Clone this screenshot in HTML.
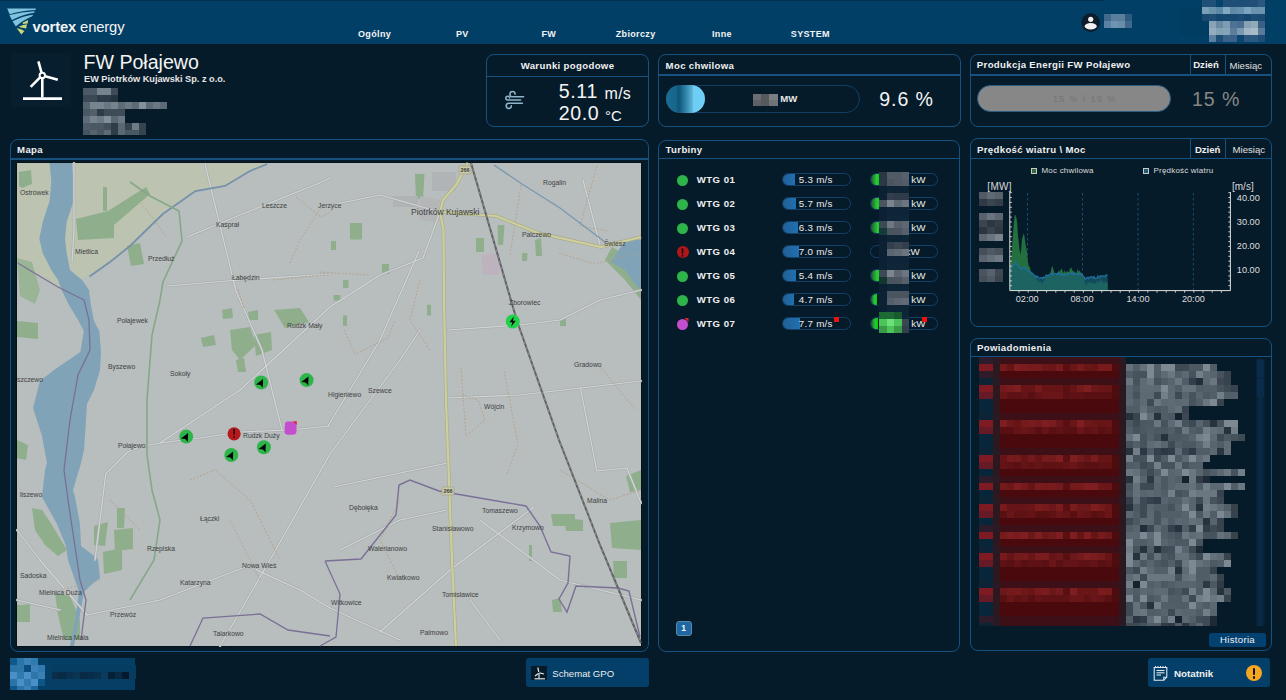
<!DOCTYPE html>
<html><head><meta charset="utf-8">
<style>
*{margin:0;padding:0;box-sizing:border-box}
html,body{width:1286px;height:700px;overflow:hidden;background:#061b2a;font-family:"Liberation Sans",sans-serif;color:#fff}
.a{position:absolute}
.t{position:absolute;white-space:nowrap}
.pn{position:absolute;border:1.6px solid #17517f;border-radius:8px}
</style></head><body>
<div class="a" style="left:0px;top:0px;width:1286px;height:44px;background:#023f67;"></div>
<div class="a" style="left:0px;top:0px;width:1104px;height:1px;background:#03304f;"></div>
<svg class="a" style="left:0;top:0" width="40" height="40" viewBox="0 0 40 40">
<path d="M7.2 8.6 L35.8 8.4 L35.6 9.9 Q20 10.5 9.6 14.3 Z" fill="#7fc3de"/>
<path d="M9.4 15.1 Q22 11.6 34.6 11.2 L34.3 12.8 Q22 14.5 11.9 20.1 Z" fill="#7fc3de"/>
<path d="M12.5 21.3 Q24 15.6 33.2 14.8 L32.3 16.2 Q23 20 15.8 26.5 Z" fill="#7fc3de"/>
<path d="M22.4 22.8 L28.1 19.9 L27.8 23.4 Q25 23.6 23.2 24 Z" fill="#c5d57c"/>
<path d="M18.6 26.7 Q23 24.6 26.9 24.3 L26.2 28.6 Q23.5 27.6 20.8 27.4 Z" fill="#c5d57c"/>
<path d="M16.6 28.1 Q21 29 24.5 31.1 L21.3 34.5 Z" fill="#c5d57c"/>
</svg>
<div class="t" style="left:32.6px;top:20.4px;font-size:14.8px;line-height:14.8px;font-weight:normal;color:#f4f4f4;letter-spacing:-0.15px"><b>vortex</b> energy</div>
<div class="t" style="left:358.0px;top:29.7px;font-size:9px;line-height:9px;font-weight:bold;color:#f4f4f4;letter-spacing:0.35px">Ogólny</div>
<div class="t" style="left:456.0px;top:29.7px;font-size:9px;line-height:9px;font-weight:bold;color:#f4f4f4;letter-spacing:0.35px">PV</div>
<div class="t" style="left:541.5px;top:29.7px;font-size:9px;line-height:9px;font-weight:bold;color:#f4f4f4;letter-spacing:0.35px">FW</div>
<div class="t" style="left:615.7px;top:29.7px;font-size:9px;line-height:9px;font-weight:bold;color:#f4f4f4;letter-spacing:0.35px">Zbiorczy</div>
<div class="t" style="left:712.0px;top:29.7px;font-size:9px;line-height:9px;font-weight:bold;color:#f4f4f4;letter-spacing:0.35px">Inne</div>
<div class="t" style="left:790.8px;top:29.7px;font-size:9px;line-height:9px;font-weight:bold;color:#f4f4f4;letter-spacing:0.35px">SYSTEM</div>
<svg class="a" style="left:1080px;top:12px" width="22" height="22" viewBox="0 0 22 22">
<circle cx="10.7" cy="10.6" r="9.3" fill="#0b1c2b"/>
<circle cx="10.7" cy="7.3" r="2.6" fill="#f0f0f0"/>
<ellipse cx="10.7" cy="14.3" rx="6" ry="3.2" fill="#f0f0f0"/>
</svg>
<div class="a" style="left:1180px;top:7px;width:86px;height:28px;background:#013c63;"></div>
<div class="a" style="left:1202px;top:0px;width:7px;height:7px;background:#1f5077;"></div>
<div class="a" style="left:1209px;top:0px;width:7px;height:7px;background:#1f5077;"></div>
<div class="a" style="left:1216px;top:0px;width:7px;height:7px;background:#064470;"></div>
<div class="a" style="left:1223px;top:0px;width:7px;height:7px;background:#1f4f77;"></div>
<div class="a" style="left:1230px;top:0px;width:7px;height:7px;background:#1f4f77;"></div>
<div class="a" style="left:1237px;top:0px;width:7px;height:7px;background:#1f4f77;"></div>
<div class="a" style="left:1244px;top:0px;width:7px;height:7px;background:#1f4f77;"></div>
<div class="a" style="left:1251px;top:0px;width:7px;height:7px;background:#214f77;"></div>
<div class="a" style="left:1258px;top:0px;width:7px;height:7px;background:#2a5880;"></div>
<div class="a" style="left:1202px;top:7px;width:7px;height:7px;background:#7aa0b8;"></div>
<div class="a" style="left:1209px;top:7px;width:7px;height:7px;background:#6a92aa;"></div>
<div class="a" style="left:1216px;top:7px;width:7px;height:7px;background:#5a88a5;"></div>
<div class="a" style="left:1223px;top:7px;width:7px;height:7px;background:#82a8c0;"></div>
<div class="a" style="left:1230px;top:7px;width:7px;height:7px;background:#5f8aa8;"></div>
<div class="a" style="left:1237px;top:7px;width:7px;height:7px;background:#6690ab;"></div>
<div class="a" style="left:1244px;top:7px;width:7px;height:7px;background:#7aa4c0;"></div>
<div class="a" style="left:1251px;top:7px;width:7px;height:7px;background:#6a94ae;"></div>
<div class="a" style="left:1258px;top:7px;width:7px;height:7px;background:#6a94ae;"></div>
<div class="a" style="left:1202px;top:14px;width:7px;height:7px;background:#1a4a72;"></div>
<div class="a" style="left:1209px;top:14px;width:7px;height:7px;background:#1e4e76;"></div>
<div class="a" style="left:1216px;top:14px;width:7px;height:7px;background:#144670;"></div>
<div class="a" style="left:1223px;top:14px;width:7px;height:7px;background:#164872;"></div>
<div class="a" style="left:1230px;top:14px;width:7px;height:7px;background:#164872;"></div>
<div class="a" style="left:1237px;top:14px;width:7px;height:7px;background:#1a4b74;"></div>
<div class="a" style="left:1244px;top:14px;width:7px;height:7px;background:#144670;"></div>
<div class="a" style="left:1251px;top:14px;width:7px;height:7px;background:#1e4e76;"></div>
<div class="a" style="left:1258px;top:14px;width:7px;height:7px;background:#1a4a72;"></div>
<div class="a" style="left:1209px;top:21px;width:7px;height:7px;background:#8aa2b6;"></div>
<div class="a" style="left:1216px;top:21px;width:7px;height:7px;background:#6a8aa4;"></div>
<div class="a" style="left:1223px;top:21px;width:7px;height:7px;background:#7e9cb4;"></div>
<div class="a" style="left:1230px;top:21px;width:7px;height:7px;background:#4e7294;"></div>
<div class="a" style="left:1237px;top:21px;width:7px;height:7px;background:#4a6e90;"></div>
<div class="a" style="left:1244px;top:21px;width:7px;height:7px;background:#8aa0b4;"></div>
<div class="a" style="left:1251px;top:21px;width:7px;height:7px;background:#90aab8;"></div>
<div class="a" style="left:1258px;top:21px;width:7px;height:7px;background:#3a6088;"></div>
<div class="a" style="left:1209px;top:28px;width:7px;height:7px;background:#95acbc;"></div>
<div class="a" style="left:1216px;top:28px;width:7px;height:7px;background:#82a2b6;"></div>
<div class="a" style="left:1223px;top:28px;width:7px;height:7px;background:#86a4b8;"></div>
<div class="a" style="left:1230px;top:28px;width:7px;height:7px;background:#5a7e9c;"></div>
<div class="a" style="left:1237px;top:28px;width:7px;height:7px;background:#7a98b0;"></div>
<div class="a" style="left:1244px;top:28px;width:7px;height:7px;background:#a0b6c4;"></div>
<div class="a" style="left:1251px;top:28px;width:7px;height:7px;background:#a8bcc8;"></div>
<div class="a" style="left:1258px;top:28px;width:7px;height:7px;background:#5a7a9a;"></div>
<div class="a" style="left:1209px;top:35px;width:7px;height:7px;background:#5a80a2;"></div>
<div class="a" style="left:1216px;top:35px;width:7px;height:7px;background:#1e4e76;"></div>
<div class="a" style="left:1223px;top:35px;width:7px;height:7px;background:#3a6288;"></div>
<div class="a" style="left:1230px;top:35px;width:7px;height:7px;background:#3a6288;"></div>
<div class="a" style="left:1237px;top:35px;width:7px;height:7px;background:#0a4470;"></div>
<div class="a" style="left:1244px;top:35px;width:7px;height:7px;background:#2a5880;"></div>
<div class="a" style="left:1251px;top:35px;width:7px;height:7px;background:#2a5880;"></div>
<div class="a" style="left:1258px;top:35px;width:7px;height:7px;background:#1e4e76;"></div>
<div class="a" style="left:1104px;top:14px;width:7px;height:7px;background:#3f6a8c;"></div>
<div class="a" style="left:1111px;top:14px;width:7px;height:7px;background:#5a7e9c;"></div>
<div class="a" style="left:1118px;top:14px;width:7px;height:7px;background:#5a7e9c;"></div>
<div class="a" style="left:1125px;top:14px;width:7px;height:7px;background:#2e5a80;"></div>
<div class="a" style="left:1104px;top:21px;width:7px;height:7px;background:#5a82a2;"></div>
<div class="a" style="left:1111px;top:21px;width:7px;height:7px;background:#6f94b0;"></div>
<div class="a" style="left:1118px;top:21px;width:7px;height:7px;background:#6a8eaa;"></div>
<div class="a" style="left:1125px;top:21px;width:7px;height:7px;background:#40688c;"></div>
<div class="a" style="left:11px;top:53px;width:60px;height:54px;background:#071e2f;"></div>
<svg class="a" style="left:11px;top:53px" width="60" height="54" viewBox="11 53 60 54">
<g stroke="#fff" stroke-width="2.6" stroke-linecap="butt" fill="none">
<line x1="42.3" y1="78" x2="42.3" y2="97.5"/>
<line x1="23" y1="98.6" x2="62" y2="98.6" stroke-width="2.8"/>
<line x1="41.5" y1="72.5" x2="38.4" y2="61.3"/>
<line x1="45.2" y1="76.3" x2="57.8" y2="79.8"/>
<line x1="40.1" y1="77.4" x2="30.7" y2="86.8"/>
<circle cx="42.3" cy="75.4" r="2.7" stroke-width="2"/>
</g></svg>
<div class="t" style="left:83.5px;top:52.7px;font-size:19.6px;line-height:19.6px;font-weight:normal;color:#f4f4f4;">FW Połajewo</div>
<div class="t" style="left:84.0px;top:74.9px;font-size:9.2px;line-height:9.2px;font-weight:bold;color:#e6e6e6;letter-spacing:0px">EW Piotrków Kujawski Sp. z o.o.</div>
<div class="a" style="left:83px;top:88px;width:7px;height:7px;background:#4b5a66;"></div>
<div class="a" style="left:90px;top:88px;width:7px;height:7px;background:#4b5a66;"></div>
<div class="a" style="left:97px;top:88px;width:7px;height:7px;background:#74838d;"></div>
<div class="a" style="left:104px;top:88px;width:7px;height:7px;background:#74838d;"></div>
<div class="a" style="left:111px;top:88px;width:7px;height:7px;background:#3d4c58;"></div>
<div class="a" style="left:83px;top:95px;width:7px;height:7px;background:#3b4956;"></div>
<div class="a" style="left:90px;top:95px;width:7px;height:7px;background:#3b4956;"></div>
<div class="a" style="left:97px;top:95px;width:7px;height:7px;background:#2d3b48;"></div>
<div class="a" style="left:104px;top:95px;width:7px;height:7px;background:#2d3b48;"></div>
<div class="a" style="left:111px;top:95px;width:7px;height:7px;background:#26343f;"></div>
<div class="a" style="left:83px;top:102px;width:7px;height:7px;background:#56646f;"></div>
<div class="a" style="left:90px;top:102px;width:7px;height:7px;background:#76848e;"></div>
<div class="a" style="left:97px;top:102px;width:7px;height:7px;background:#76848e;"></div>
<div class="a" style="left:104px;top:102px;width:7px;height:7px;background:#6a7883;"></div>
<div class="a" style="left:111px;top:102px;width:7px;height:7px;background:#76848e;"></div>
<div class="a" style="left:118px;top:102px;width:7px;height:7px;background:#5d6b76;"></div>
<div class="a" style="left:125px;top:102px;width:7px;height:7px;background:#6a7883;"></div>
<div class="a" style="left:132px;top:102px;width:7px;height:7px;background:#5d6b76;"></div>
<div class="a" style="left:139px;top:102px;width:7px;height:7px;background:#83919b;"></div>
<div class="a" style="left:146px;top:102px;width:7px;height:7px;background:#5d6b76;"></div>
<div class="a" style="left:153px;top:102px;width:7px;height:7px;background:#6a7883;"></div>
<div class="a" style="left:160px;top:102px;width:7px;height:7px;background:#5d6b76;"></div>
<div class="a" style="left:83px;top:109px;width:7px;height:7px;background:#4a5865;"></div>
<div class="a" style="left:90px;top:109px;width:7px;height:7px;background:#555f6a;"></div>
<div class="a" style="left:97px;top:109px;width:7px;height:7px;background:#2e3c49;"></div>
<div class="a" style="left:104px;top:109px;width:7px;height:7px;background:#3e4c58;"></div>
<div class="a" style="left:111px;top:109px;width:7px;height:7px;background:#3e4c58;"></div>
<div class="a" style="left:118px;top:109px;width:7px;height:7px;background:#3e4c58;"></div>
<div class="a" style="left:83px;top:116px;width:7px;height:7px;background:#5f6d78;"></div>
<div class="a" style="left:90px;top:116px;width:7px;height:7px;background:#75838d;"></div>
<div class="a" style="left:97px;top:116px;width:7px;height:7px;background:#6b7984;"></div>
<div class="a" style="left:104px;top:116px;width:7px;height:7px;background:#818f99;"></div>
<div class="a" style="left:111px;top:116px;width:7px;height:7px;background:#5a6873;"></div>
<div class="a" style="left:118px;top:116px;width:7px;height:7px;background:#6b7984;"></div>
<div class="a" style="left:83px;top:123px;width:7px;height:7px;background:#4f5d68;"></div>
<div class="a" style="left:90px;top:123px;width:7px;height:7px;background:#4a5863;"></div>
<div class="a" style="left:97px;top:123px;width:7px;height:7px;background:#4a5863;"></div>
<div class="a" style="left:104px;top:123px;width:7px;height:7px;background:#444f5b;"></div>
<div class="a" style="left:111px;top:123px;width:7px;height:7px;background:#2f3d49;"></div>
<div class="a" style="left:118px;top:123px;width:7px;height:7px;background:#5a6873;"></div>
<div class="a" style="left:125px;top:123px;width:7px;height:7px;background:#36444f;"></div>
<div class="a" style="left:132px;top:123px;width:7px;height:7px;background:#6e7c86;"></div>
<div class="a" style="left:139px;top:123px;width:7px;height:7px;background:#36444f;"></div>
<div class="a" style="left:83px;top:130px;width:7px;height:5px;background:#46545f;"></div>
<div class="a" style="left:90px;top:130px;width:7px;height:5px;background:#56646f;"></div>
<div class="a" style="left:97px;top:130px;width:7px;height:5px;background:#4a5863;"></div>
<div class="a" style="left:104px;top:130px;width:7px;height:5px;background:#5d6b76;"></div>
<div class="a" style="left:111px;top:130px;width:7px;height:5px;background:#2f3d49;"></div>
<div class="a" style="left:118px;top:130px;width:7px;height:5px;background:#5a6873;"></div>
<div class="a" style="left:125px;top:130px;width:7px;height:5px;background:#4a5863;"></div>
<div class="a" style="left:132px;top:130px;width:7px;height:5px;background:#4a5863;"></div>
<div class="a" style="left:139px;top:130px;width:7px;height:5px;background:#36444f;"></div>
<div class="pn" style="left:485.5px;top:53.5px;width:163.5px;height:73.5px"></div>
<div class="a" style="left:486.5px;top:75.5px;width:161.5px;height:1.6px;background:#17517f;"></div>
<div class="t" style="left:417.5px;width:300px;text-align:center;top:60.5px;font-size:9.6px;line-height:9.6px;font-weight:bold;color:#f0f0f0;letter-spacing:0.35px">Warunki pogodowe</div>
<svg class="a" style="left:500px;top:88px" width="26" height="24" viewBox="500 88 26 24">
<g stroke="#8fb4c9" stroke-width="1.5" fill="none" stroke-linecap="round" transform="translate(0.8 0)">
<path d="M522.8 96.8 H511.7 A2.6 2.6 0 1 1 514.3 94.2"/>
<path d="M519.8 100 H506.9 A1.9 1.9 0 1 1 508.8 98.1"/>
<path d="M521.6 103.2 H508 A2.6 2.6 0 1 0 510.6 105.8"/>
</g></svg>
<div class="t" style="left:558.8px;top:82.1px;font-size:19.6px;line-height:19.6px;font-weight:normal;color:#f4f4f4;letter-spacing:0.6px">5.11</div>
<div class="t" style="left:604.5px;top:86.2px;font-size:16px;line-height:16px;font-weight:normal;color:#f4f4f4;letter-spacing:0.3px">m/s</div>
<div class="t" style="left:558.8px;top:103.9px;font-size:19.6px;line-height:19.6px;font-weight:normal;color:#f4f4f4;letter-spacing:0.6px">20.0</div>
<div class="t" style="left:605.0px;top:107.8px;font-size:15px;line-height:15px;font-weight:normal;color:#f4f4f4;">°C</div>
<div class="pn" style="left:657.5px;top:53.5px;width:303.5px;height:73.5px"></div>
<div class="a" style="left:658.5px;top:74.4px;width:301.5px;height:1.6px;background:#17517f;"></div>
<div class="t" style="left:665.6px;top:60.8px;font-size:9.6px;line-height:9.6px;font-weight:bold;color:#f0f0f0;letter-spacing:0.35px">Moc chwilowa</div>
<div class="a" style="left:666px;top:85px;width:194px;height:28px;border:1.5px solid #123e62;border-radius:14px"></div>
<div class="a" style="left:666px;top:85.2px;width:38.5px;height:27.6px;border-radius:14px;background:linear-gradient(90deg,#1a6d93 0%,#17668c 25%,#0e5478 33%,#2f82a8 50%,#5fb6da 68%,#6dcdf4 70%,#6fcff6 100%)"></div>
<div class="a" style="left:753.0px;top:94px;width:8.3px;height:12px;background:#6b6f73;"></div>
<div class="a" style="left:761.2px;top:94px;width:8.3px;height:12px;background:#55595d;"></div>
<div class="a" style="left:769.4px;top:94px;width:8.3px;height:12px;background:#7a7e82;"></div>
<div class="a" style="left:753px;top:100px;width:8.3px;height:6px;background:#5d6165;"></div>
<div class="a" style="left:769.4px;top:100px;width:8.3px;height:6px;background:#6f7377;"></div>
<div class="t" style="left:780.2px;top:94.0px;font-size:9.6px;line-height:9.6px;font-weight:bold;color:#e8e8e8;">MW</div>
<div class="t" style="left:879.3px;top:89.7px;font-size:19.6px;line-height:19.6px;font-weight:normal;color:#f4f4f4;letter-spacing:0.9px">9.6 %</div>
<div class="pn" style="left:969.5px;top:53.5px;width:302.5px;height:73.5px"></div>
<div class="a" style="left:970.5px;top:74.2px;width:300.5px;height:1.6px;background:#17517f;"></div>
<div class="t" style="left:976.8px;top:60.3px;font-size:9.6px;line-height:9.6px;font-weight:bold;color:#f0f0f0;letter-spacing:0.35px">Produkcja Energii FW Połajewo</div>
<div class="a" style="left:1189.5px;top:55px;width:1.5px;height:21px;background:#17517f;"></div>
<div class="a" style="left:1224.5px;top:55px;width:1.5px;height:21px;background:#17517f;"></div>
<div class="t" style="left:1193.2px;top:60.3px;font-size:9.6px;line-height:9.6px;font-weight:bold;color:#f0f0f0;">Dzień</div>
<div class="t" style="left:1229.5px;top:61.0px;font-size:9.6px;line-height:9.6px;font-weight:normal;color:#e0e0e0;">Miesiąc</div>
<div class="a" style="left:977px;top:85.4px;width:193.5px;height:26.8px;border-radius:13.4px;background:#878787;border:1px solid #2a5d86"></div>
<div class="t" style="left:1052.7px;top:93.5px;font-size:9.6px;line-height:9.6px;font-weight:bold;color:#7a7a7a;letter-spacing:1.1px">15 % / 15 %</div>
<div class="t" style="left:1192.0px;top:90.1px;font-size:19.6px;line-height:19.6px;font-weight:normal;color:#878787;letter-spacing:0.9px">15 %</div>
<div class="pn" style="left:9.5px;top:138.5px;width:639.5px;height:513.0px"></div>
<div class="a" style="left:10.5px;top:158.2px;width:637.5px;height:1.6px;background:#17517f;"></div>
<div class="t" style="left:17.1px;top:144.6px;font-size:9.6px;line-height:9.6px;font-weight:bold;color:#f0f0f0;letter-spacing:0.35px">Mapa</div>
<svg class="a" style="left:16px;top:162px" width="626" height="485" viewBox="16 162 626 485">
<rect x="16" y="162" width="626" height="485" fill="#08121b"/>
<rect x="17" y="163" width="624" height="483" fill="#b8bdbe"/>
<!-- farmland tint upper-left -->
<path d="M17 163 L268 163 L250 171 L225 186 L195 191 L163 214 L130 246 L89.5 276.5 L58 287 L17 263 Z" fill="#bcc3b1"/>
<!-- green areas -->
<g fill="#8fae8b">
<path d="M19 172 L31 170 L32 184 L22 188 L19 186 Z"/>
<path d="M76 219 L108 211 L146 187 L150 194 L114 225 L114 238 L78 240 Z"/>
<path d="M103 187 L107 187 L107 211 L103 211 Z"/>
<path d="M127 246 L140 243 L144 264 L131 266 Z"/>
<path d="M17 258 L32 262 L40 290 L35 304 L20 296 Z" fill="#9ab596"/>
<path d="M17 321 L38 323 L38 339 L17 337 Z"/>
<path d="M32 508 L42 510 L52 525 L67 550 L58 556 L45 545 L35 530 Z"/>
<path d="M55 593 L70 596 L80 620 L80 640 L64 640 L58 615 Z"/>
<path d="M17 606 L30 604 L30 622 L17 622 Z"/>
<path d="M114 530 L133 528 L133 549 L115 551 Z"/>
<path d="M103 552 L122 548 L122 570 L104 574 Z"/>
<path d="M94 526 L108 522 L105 546 L94 545 Z"/>
<path d="M117 508 L125 508 L124 528 L117 528 Z"/>
<path d="M230 330 L250 327 L256 345 L240 360 L232 350 Z"/>
<path d="M254 335 L271 332 L272 350 L256 356 Z"/>
<path d="M274 310 L300 308 L309 322 L285 328 Z"/>
<path d="M201 338 L214 335 L216 345 L203 347 Z"/>
<path d="M222 310 L232 308 L233 318 L223 319 Z"/>
<path d="M248 312 L258 310 L258 320 L249 320 Z"/>
<path d="M236 360 L244 358 L246 372 L238 372 Z"/>
<path d="M551 514 L575 514 L575 526 L553 526 Z"/>
<path d="M564 518 L583 520 L583 531 L566 531 Z"/>
<path d="M610 523 L641 520 L641 550 L612 548 Z"/>
<path d="M613 561 L627 561 L627 578 L614 578 Z"/>
<path d="M529 545 L532 545 L532 561 L529 561 Z"/>
<path d="M612 247 L641 265 L641 300 L625 280 L605 260 Z"/>
<path d="M350 223 L362 223 L362 239.5 L350 239.5 Z"/>
<path d="M476 238 L484 238 L484 252 L476 252 Z"/>
<path d="M535 240 L541 238 L542 256 L536 256 Z"/>
<path d="M415 174 L424.5 174 L423 199 L416 199 Z"/>
<path d="M497.7 225 L504.5 225 L503 245 L498 245 Z"/>
<path d="M522 253 L527.6 253 L527 261 L522 261 Z"/>
<path d="M331 241 L336 241 L336 250 L331 250 Z"/>
<path d="M343 280 L348.5 280 L348.5 288 L343 288 Z"/>
<path d="M333.6 295 L340.4 295 L340.4 300.6 L333.6 300.6 Z"/>
<path d="M343 315.5 L347 315.5 L347 326 L343 326 Z"/>
<path d="M427 304.7 L431 304.7 L431 315.5 L427 315.5 Z"/>
<path d="M382 264 L389 264 L389 274 L382 274 Z"/>
<path d="M560 318 L566 318 L566 326 L560 326 Z"/>
<path d="M626 476 L641 470 L641 490 L630 492 Z"/>
<path d="M552 600 L560 598 L562 612 L553 612 Z"/>
<path d="M17 440 L28 445 L26 460 L17 458 Z"/>
<path d="M17 605 L23 605 L23 620 L17 620 Z"/>
</g>
<!-- urban Piotrkow -->
<path d="M432 172 L456 172 L456 191 L432 191 Z" fill="#b1b4b6"/>
<path d="M393 196 L418 196 L418 207 L393 207 Z" fill="#b1b4b6"/>
<path d="M420 196 L440 200 L436 222 L420 220 Z" fill="#b4b6b8"/>
<path d="M481.5 255 L499 253 L499 275 L483 275 Z" fill="#bcb3bf"/>
<!-- lakes -->
<path d="M49.6 163 L72 163 L73.6 181 L73.6 201 L66.7 222 L65 239 L66.7 253 L70 270 L82 280 L89 290 L90.7 304 L94 321 L99.3 331 L101 352 L100 370 L94 390 L87 404 L86 420 L84 450 L81 463 L73 490 L75 497 L80 524 L81 546 L98 559 L100 578 L90 586 L84 592 L79 620 L74 646 L70 646 L75 620 L79 592 L77 586 L68 560 L66 546 L57 524 L42 497 L45 470 L47 463 L42 436 L33 408 L40 381 L54 370 L80.4 352 L83.8 331 L78.7 321 L68.4 304 L61.6 290 L58 280 L51.3 270 L42.7 253 L39.3 239 L42.7 222 L49.6 201 L51.3 181 Z" fill="#80a3b8"/>
<path d="M611 262 L625 270 L636 285 L641 290 L641 240 L630 238 L620 248 Z" fill="#80a3b8"/>
<!-- roads white -->
<g fill="none" stroke="#a9aeaf" stroke-width="2.6" stroke-linecap="round" stroke-linejoin="round" id="rd">
<path d="M141 446.5 L160 443 L200 438 L240 432 L290 430 L330 426" />
<path d="M141 446.5 L127.5 452 L105.8 473.7 L100 520 L95 560"/>
<path d="M160 443 L240 390 L330 307 L380 275 L423 258 L440 212"/>
<path d="M87 615 L160 600 L248 566 L300 590 L330 608 L400 640"/>
<path d="M220 646 L270 560 L330 454 L400 360 L420 330"/>
<path d="M205 164 L236 291 L262 350 L282 430"/>
<path d="M187 237 L240 215 L317 184 L330 178"/>
<path d="M167 286 L240 280 L330 274"/>
<path d="M331 205 L380 195 L440 212"/>
<path d="M328 426 L380 340 L419 251"/>
<path d="M447.5 398 L520 395 L580.5 388 L641 381"/>
<path d="M580.5 388 L596.8 471 L627 468 L641 503"/>
<path d="M333.6 487 L447.5 463"/>
<path d="M448 330 L520 325 L560 320 L600 300 L641 290"/>
<path d="M17 530 L40 560 L87 615"/>
<path d="M17 600 L60 610"/>
<path d="M74 163 L74 230 L72 262"/>
<path d="M480 520 L560 580 L641 600"/>
<path d="M380 632 L450 570 L534 507"/>
<path d="M340 550 L400 520 L447 510"/>
<path d="M470 600 L500 640"/>
<path d="M583 180 L600 245"/>
</g>
<g fill="none" stroke="#d3d6d6" stroke-width="1.2" stroke-linecap="round" stroke-linejoin="round">
<path d="M141 446.5 L160 443 L200 438 L240 432 L290 430 L330 426" />
<path d="M141 446.5 L127.5 452 L105.8 473.7 L100 520 L95 560"/>
<path d="M160 443 L240 390 L330 307 L380 275 L423 258 L440 212"/>
<path d="M87 615 L160 600 L248 566 L300 590 L330 608 L400 640"/>
<path d="M220 646 L270 560 L330 454 L400 360 L420 330"/>
<path d="M205 164 L236 291 L262 350 L282 430"/>
<path d="M187 237 L240 215 L317 184 L330 178"/>
<path d="M167 286 L240 280 L330 274"/>
<path d="M331 205 L380 195 L440 212"/>
<path d="M328 426 L380 340 L419 251"/>
<path d="M447.5 398 L520 395 L580.5 388 L641 381"/>
<path d="M580.5 388 L596.8 471 L627 468 L641 503"/>
<path d="M333.6 487 L447.5 463"/>
<path d="M448 330 L520 325 L560 320 L600 300 L641 290"/>
<path d="M17 530 L40 560 L87 615"/>
<path d="M17 600 L60 610"/>
<path d="M74 163 L74 230 L72 262"/>
<path d="M480 520 L560 580 L641 600"/>
<path d="M380 632 L450 570 L534 507"/>
<path d="M340 550 L400 520 L447 510"/>
<path d="M470 600 L500 640"/>
<path d="M583 180 L600 245"/>
</g>
<!-- tracks -->
<g fill="none" stroke="#b39f86" stroke-width="0.9" stroke-dasharray="1.8 1.8">
<path d="M141 203 L167 237"/>
<path d="M296 197 L321 217 L330 212"/>
<path d="M290 263 L300 240 L321 208"/>
<path d="M273 280 L330 274"/>
<path d="M238 289 L244 309"/>
<path d="M344 330 L355 354 L388 338 L395 320"/>
<path d="M461 368 L466 436 L485 420 L478 400 L462 395"/>
<path d="M504 371 L518 444 L507 474"/>
<path d="M597 363 L635 409"/>
<path d="M597 166 L580 226 L608 231"/>
<path d="M559 253 L594 264 L640 253"/>
<path d="M521 185 L510 256"/>
<path d="M320 272 L369 275"/>
<path d="M190 480 L215 470 L250 500 L280 560"/>
<path d="M110 500 L140 530"/>
<path d="M400 500 L380 540 L400 580"/>
<path d="M560 470 L610 500 L641 490"/>
<path d="M230 520 L260 580"/>
<path d="M60 590 L100 580"/>
<path d="M420 280 L410 320 L430 350"/>
</g>
<!-- canal/stream blue -->
<path d="M89.5 276.5 L110 262 L130 246 L162.8 214 L195.4 191 L225 186 L250 171 L267.3 164" fill="none" stroke="#7592aa" stroke-width="1.8"/>
<path d="M17.6 263 L58 287 L84 300" fill="none" stroke="#7a7096" stroke-width="1.2"/>
<path d="M494 165 L522 184 L560 208 L605 242" fill="none" stroke="#7a98b0" stroke-width="1.4"/>
<!-- green stream -->
<path d="M130 182 L150 196 L179 211 L182 241 L163 282 L160 300 L152 335 L147 400 L147 455 L152 490 L160 520 L154 560 L130 600" fill="none" stroke="#86a888" stroke-width="1.6"/>
<!-- yellow road -->
<path d="M468 163 L456 185 L443 200 L440 212 L443.5 230 L444 300 L446 400 L449 480 L452 560 L456 646" fill="none" stroke="#a9ab8a" stroke-width="3.4"/>
<path d="M468 163 L456 185 L443 200 L440 212 L443.5 230 L444 300 L446 400 L449 480 L452 560 L456 646" fill="none" stroke="#cdcf9d" stroke-width="2.2"/>
<path d="M440 212 L496 216 L538 233 L601 247 L641 237" fill="none" stroke="#a9ab8a" stroke-width="3.4"/>
<path d="M440 212 L496 216 L538 233 L601 247 L641 237" fill="none" stroke="#cdcf9d" stroke-width="2.2"/>
<!-- purple boundary -->
<path d="M84 300 L89 320 L90 350 L78 375 L70 420 L64 470 L68 500 L74 540 L80 580 L86 600 L81 640" fill="none" stroke="#7a7096" stroke-width="1.3"/>
<path d="M325 561 L361 559 L396 515 L399 485 L410 480 L439 491 L526 506 L540 526 L551 552 L570 556 L568 583 L559 599 L567 612 L576 586 L618 588 L629 591 L640 637" fill="none" stroke="#7a7096" stroke-width="1.4"/>
<path d="M325 561 L340 594 L336 637 L320 646" fill="none" stroke="#7a7096" stroke-width="1.3"/>
<path d="M190 646 L203 618 L260 614 L288 630 L330 636" fill="none" stroke="#7a7096" stroke-width="1.3"/>
<!-- railway -->
<path d="M471 163 L517 321 L559 440 L600 545 L641 643" fill="none" stroke="#5d6062" stroke-width="2"/>
<path d="M471 163 L517 321 L559 440 L600 545 L641 643" fill="none" stroke="#9a9c9c" stroke-width="0.8" stroke-dasharray="3 3"/>
<!-- labels -->
<g font-family="Liberation Sans" font-size="6.8" fill="#3e4242">
<text x="20" y="195">Ostrówek</text>
<text x="75" y="254">Mietlica</text>
<text x="148" y="261">Przedłuż</text>
<text x="216" y="227">Kasprał</text>
<text x="262" y="208">Leszcze</text>
<text x="318" y="208">Jerzyce</text>
<text x="232" y="280">Łabędzin</text>
<text x="117" y="323">Połajewek</text>
<text x="287" y="328">Rudzk Mały</text>
<text x="108" y="369">Byszewo</text>
<text x="170" y="376">Sokoły</text>
<text x="17" y="382">szczewo</text>
<text x="118" y="448">Połajewo</text>
<text x="243" y="438">Rudzk Duży</text>
<text x="200" y="521">Łączki</text>
<text x="147" y="551">Rzepiska</text>
<text x="20" y="578">Sadoska</text>
<text x="39" y="595">Mielnica Duża</text>
<text x="180" y="585">Katarzyna</text>
<text x="242" y="568">Nowa Wieś</text>
<text x="110" y="617">Przewóz</text>
<text x="20" y="497">liszewo</text>
<text x="47" y="640">Mielnica Mała</text>
<text x="213" y="636">Talarkowo</text>
<text x="411" y="215" font-size="8.5">Piotrków Kujawski</text>
<text x="543" y="185">Rogalin</text>
<text x="522" y="237">Palczewo</text>
<text x="604" y="246">Świesz</text>
<text x="509" y="305">Zborowiec</text>
<text x="574" y="367">Gradowo</text>
<text x="328" y="397">Higieniewo</text>
<text x="368" y="393">Szewce</text>
<text x="484" y="409">Wójcin</text>
<text x="587" y="503">Malina</text>
<text x="349" y="510">Dębołęka</text>
<text x="482" y="513">Tomaszewo</text>
<text x="432" y="531">Stanisławowo</text>
<text x="512" y="530">Krzymowo</text>
<text x="368" y="551">Walerianowo</text>
<text x="387" y="580">Kwiatkowo</text>
<text x="331" y="605">Witkowice</text>
<text x="442" y="597">Tomisławice</text>
<text x="420" y="635">Palmowo</text>
</g>
<!-- 266 badges -->
<g font-family="Liberation Sans" font-size="5.5" font-weight="bold" fill="#3e4242">
<rect x="459" y="166" width="12" height="8" rx="1.5" fill="#c9caa8" stroke="#9c9d80" stroke-width="0.6"/><text x="460.5" y="172">266</text>
<rect x="442" y="487" width="12" height="8" rx="1.5" fill="#c9caa8" stroke="#9c9d80" stroke-width="0.6"/><text x="443.5" y="493">266</text>
</g>
<!-- markers -->
<g>
<circle cx="261.2" cy="382.5" r="7" fill="#2db54b"/>
<circle cx="306.6" cy="380.1" r="7" fill="#2db54b"/>
<circle cx="186.2" cy="436.6" r="7" fill="#2db54b"/>
<circle cx="231.3" cy="455" r="7" fill="#2db54b"/>
<circle cx="263.9" cy="447.2" r="7" fill="#2db54b"/>
</g>
<g fill="#050505">
<path transform="translate(261.2 382.5)" d="M1.9 -3.6 L-5.3 1.9 L-1 2.4 L1.6 5.3 Z"/>
<path transform="translate(306.6 380.1)" d="M1.9 -3.6 L-5.3 1.9 L-1 2.4 L1.6 5.3 Z"/>
<path transform="translate(186.2 436.6)" d="M1.9 -3.6 L-5.3 1.9 L-1 2.4 L1.6 5.3 Z"/>
<path transform="translate(231.3 455)" d="M1.9 -3.6 L-5.3 1.9 L-1 2.4 L1.6 5.3 Z"/>
<path transform="translate(263.9 447.2)" d="M1.9 -3.6 L-5.3 1.9 L-1 2.4 L1.6 5.3 Z"/>
</g>
<circle cx="234.1" cy="433.8" r="6.6" fill="#b8171b"/>
<path d="M233.2 429 L235 429 L234.6 435.2 L233.6 435.2 Z M233.4 436.6 h1.4 v1.5 h-1.4 Z" fill="#111"/>
<path d="M285 424 Q285 421.5 287.5 421.5 L293 421.5 Q296.5 421.5 296.5 425 L296.5 431 Q296.5 434.8 292.5 434.8 L288 434.8 Q284.5 434.8 284.5 431 Z" fill="#c34fcf"/>
<path d="M293 421.3 L296.8 421.3 L296.8 425 Z" fill="#e0242a"/>
<circle cx="512.75" cy="321.5" r="7" fill="#1fd24a"/>
<path d="M513.8 316.5 L509.5 322.3 L512.3 322.3 L511.2 326.8 L515.8 320.7 L513 320.7 Z" fill="#060606"/>
</svg>
<div class="pn" style="left:658px;top:139.5px;width:302px;height:512.0px"></div>
<div class="a" style="left:659px;top:157.7px;width:300px;height:1.6px;background:#17517f;"></div>
<div class="t" style="left:665.6px;top:145.0px;font-size:9.6px;line-height:9.6px;font-weight:bold;color:#f0f0f0;letter-spacing:0.35px">Turbiny</div>
<div class="a" style="left:677px;top:174.5px;width:11px;height:11px;border-radius:50%;background:#2db54b"></div>
<div class="t" style="left:696.8px;top:175.0px;font-size:9.6px;line-height:9.6px;font-weight:bold;color:#f0f0f0;letter-spacing:0.45px">WTG 01</div>
<div class="a" style="left:782px;top:173.2px;width:68.6px;height:12.6px;border:1.2px solid #143f66;border-radius:6.3px;overflow:hidden"><div style="position:absolute;left:0;top:0;bottom:0;width:12.200000000000045px;background:linear-gradient(90deg,#215f96,#2170b0)"></div></div>
<div class="t" style="left:798.8px;top:175.0px;font-size:9.8px;line-height:9.8px;font-weight:normal;color:#ececec;letter-spacing:0.25px">5.3 m/s</div>
<div class="a" style="left:870px;top:173.2px;width:68px;height:12.6px;border:1.2px solid #143f66;border-radius:6.3px;overflow:hidden"><div style="position:absolute;left:0;top:0;bottom:0;width:9px;background:linear-gradient(90deg,#1c5a2c,#2ac83c 60%,#00d300)"></div></div>
<div class="t" style="left:911.2px;top:175.0px;font-size:9.8px;line-height:9.8px;font-weight:normal;color:#ececec;letter-spacing:0.2px">kW</div>
<div class="a" style="left:677px;top:198.5px;width:11px;height:11px;border-radius:50%;background:#2db54b"></div>
<div class="t" style="left:696.8px;top:199.0px;font-size:9.6px;line-height:9.6px;font-weight:bold;color:#f0f0f0;letter-spacing:0.45px">WTG 02</div>
<div class="a" style="left:782px;top:197.2px;width:68.6px;height:12.6px;border:1.2px solid #143f66;border-radius:6.3px;overflow:hidden"><div style="position:absolute;left:0;top:0;bottom:0;width:12.600000000000023px;background:linear-gradient(90deg,#215f96,#2170b0)"></div></div>
<div class="t" style="left:798.8px;top:199.0px;font-size:9.8px;line-height:9.8px;font-weight:normal;color:#ececec;letter-spacing:0.25px">5.7 m/s</div>
<div class="a" style="left:870px;top:197.2px;width:68px;height:12.6px;border:1.2px solid #143f66;border-radius:6.3px;overflow:hidden"><div style="position:absolute;left:0;top:0;bottom:0;width:10px;background:linear-gradient(90deg,#1c5a2c,#2ac83c 60%,#00d300)"></div></div>
<div class="t" style="left:911.2px;top:199.0px;font-size:9.8px;line-height:9.8px;font-weight:normal;color:#ececec;letter-spacing:0.2px">kW</div>
<div class="a" style="left:677px;top:222.5px;width:11px;height:11px;border-radius:50%;background:#2db54b"></div>
<div class="t" style="left:696.8px;top:223.0px;font-size:9.6px;line-height:9.6px;font-weight:bold;color:#f0f0f0;letter-spacing:0.45px">WTG 03</div>
<div class="a" style="left:782px;top:221.2px;width:68.6px;height:12.6px;border:1.2px solid #143f66;border-radius:6.3px;overflow:hidden"><div style="position:absolute;left:0;top:0;bottom:0;width:14.5px;background:linear-gradient(90deg,#215f96,#2170b0)"></div></div>
<div class="t" style="left:798.8px;top:223.0px;font-size:9.8px;line-height:9.8px;font-weight:normal;color:#ececec;letter-spacing:0.25px">6.3 m/s</div>
<div class="a" style="left:870px;top:221.2px;width:68px;height:12.6px;border:1.2px solid #143f66;border-radius:6.3px;overflow:hidden"><div style="position:absolute;left:0;top:0;bottom:0;width:10.5px;background:linear-gradient(90deg,#1c5a2c,#2ac83c 60%,#00d300)"></div></div>
<div class="t" style="left:911.2px;top:223.0px;font-size:9.8px;line-height:9.8px;font-weight:normal;color:#ececec;letter-spacing:0.2px">kW</div>
<div class="a" style="left:676.5px;top:246px;width:12px;height:12px;border-radius:50%;background:#b2161a"></div>
<svg class="a" style="left:676px;top:245.5px" width="13" height="13" viewBox="0 0 13 13"><path d="M5.3 2.6 L7.7 2.6 L7 8.2 L6 8.2 Z" fill="#111"/><circle cx="6.5" cy="9.8" r="1" fill="#111"/></svg>
<div class="t" style="left:696.8px;top:247.0px;font-size:9.6px;line-height:9.6px;font-weight:bold;color:#f0f0f0;letter-spacing:0.45px">WTG 04</div>
<div class="a" style="left:782px;top:245.2px;width:68.6px;height:12.6px;border:1.2px solid #143f66;border-radius:6.3px;overflow:hidden"><div style="position:absolute;left:0;top:0;bottom:0;width:15.899999999999977px;background:linear-gradient(90deg,#215f96,#2170b0)"></div></div>
<div class="t" style="left:798.8px;top:247.0px;font-size:9.8px;line-height:9.8px;font-weight:normal;color:#ececec;letter-spacing:0.25px">7.0 m/s</div>
<div class="a" style="left:870px;top:245.2px;width:68px;height:12.6px;border:1.2px solid #143f66;border-radius:6.3px;overflow:hidden"></div>
<div class="t" style="left:905.5px;top:247.0px;font-size:9.8px;line-height:9.8px;font-weight:normal;color:#ececec;letter-spacing:0.2px">kW</div>
<div class="a" style="left:677px;top:270.5px;width:11px;height:11px;border-radius:50%;background:#2db54b"></div>
<div class="t" style="left:696.8px;top:271.0px;font-size:9.6px;line-height:9.6px;font-weight:bold;color:#f0f0f0;letter-spacing:0.45px">WTG 05</div>
<div class="a" style="left:782px;top:269.2px;width:68.6px;height:12.6px;border:1.2px solid #143f66;border-radius:6.3px;overflow:hidden"><div style="position:absolute;left:0;top:0;bottom:0;width:12.700000000000045px;background:linear-gradient(90deg,#215f96,#2170b0)"></div></div>
<div class="t" style="left:798.8px;top:271.0px;font-size:9.8px;line-height:9.8px;font-weight:normal;color:#ececec;letter-spacing:0.25px">5.4 m/s</div>
<div class="a" style="left:870px;top:269.2px;width:68px;height:12.6px;border:1.2px solid #143f66;border-radius:6.3px;overflow:hidden"><div style="position:absolute;left:0;top:0;bottom:0;width:10px;background:linear-gradient(90deg,#1c5a2c,#2ac83c 60%,#00d300)"></div></div>
<div class="t" style="left:911.2px;top:271.0px;font-size:9.8px;line-height:9.8px;font-weight:normal;color:#ececec;letter-spacing:0.2px">kW</div>
<div class="a" style="left:677px;top:294.5px;width:11px;height:11px;border-radius:50%;background:#2db54b"></div>
<div class="t" style="left:696.8px;top:295.0px;font-size:9.6px;line-height:9.6px;font-weight:bold;color:#f0f0f0;letter-spacing:0.45px">WTG 06</div>
<div class="a" style="left:782px;top:293.2px;width:68.6px;height:12.6px;border:1.2px solid #143f66;border-radius:6.3px;overflow:hidden"><div style="position:absolute;left:0;top:0;bottom:0;width:11px;background:linear-gradient(90deg,#215f96,#2170b0)"></div></div>
<div class="t" style="left:798.8px;top:295.0px;font-size:9.8px;line-height:9.8px;font-weight:normal;color:#ececec;letter-spacing:0.25px">4.7 m/s</div>
<div class="a" style="left:870px;top:293.2px;width:68px;height:12.6px;border:1.2px solid #143f66;border-radius:6.3px;overflow:hidden"><div style="position:absolute;left:0;top:0;bottom:0;width:6px;background:linear-gradient(90deg,#1c5a2c,#2ac83c 60%,#00d300)"></div></div>
<div class="t" style="left:911.2px;top:295.0px;font-size:9.8px;line-height:9.8px;font-weight:normal;color:#ececec;letter-spacing:0.2px">kW</div>
<div class="a" style="left:677px;top:318.5px;width:11px;height:11px;border-radius:50%;background:#c34fcf"></div>
<svg class="a" style="left:683px;top:318px" width="6" height="6" viewBox="0 0 6 6"><path d="M1.5 0 L5.5 0 L5.5 4 Z" fill="#e0242a"/></svg>
<div class="t" style="left:696.8px;top:319.0px;font-size:9.6px;line-height:9.6px;font-weight:bold;color:#f0f0f0;letter-spacing:0.45px">WTG 07</div>
<div class="a" style="left:782px;top:317.2px;width:68.6px;height:12.6px;border:1.2px solid #143f66;border-radius:6.3px;overflow:hidden"><div style="position:absolute;left:0;top:0;bottom:0;width:17.399999999999977px;background:linear-gradient(90deg,#215f96,#2170b0)"></div></div>
<div class="t" style="left:798.8px;top:319.0px;font-size:9.8px;line-height:9.8px;font-weight:normal;color:#ececec;letter-spacing:0.25px">7.7 m/s</div>
<div class="a" style="left:870px;top:317.2px;width:68px;height:12.6px;border:1.2px solid #143f66;border-radius:6.3px;overflow:hidden"><div style="position:absolute;left:0;top:0;bottom:0;width:7px;background:linear-gradient(90deg,#1c5a2c,#2ac83c 60%,#00d300)"></div></div>
<div class="t" style="left:911.2px;top:319.0px;font-size:9.8px;line-height:9.8px;font-weight:normal;color:#ececec;letter-spacing:0.2px">kW</div>
<div class="a" style="left:834.2px;top:317.4px;width:5.2px;height:4.6px;background:#ee1111;"></div>
<div class="a" style="left:921.9px;top:317.4px;width:4.8px;height:4.6px;background:#ee1111;"></div>
<div class="a" style="left:879.0px;top:172px;width:7.5px;height:7px;background:#2a3744;"></div>
<div class="a" style="left:886.5px;top:172px;width:7.5px;height:7px;background:#505b66;"></div>
<div class="a" style="left:894.0px;top:172px;width:7.5px;height:7px;background:#4f5a65;"></div>
<div class="a" style="left:901.5px;top:172px;width:7.5px;height:7px;background:#56616c;"></div>
<div class="a" style="left:879.0px;top:179px;width:7.5px;height:7px;background:#2a3744;"></div>
<div class="a" style="left:886.5px;top:179px;width:7.5px;height:7px;background:#4a5560;"></div>
<div class="a" style="left:894.0px;top:179px;width:7.5px;height:7px;background:#4e5964;"></div>
<div class="a" style="left:901.5px;top:179px;width:7.5px;height:7px;background:#525d68;"></div>
<div class="a" style="left:879.0px;top:186px;width:7.5px;height:7px;background:#0b2133;"></div>
<div class="a" style="left:886.5px;top:186px;width:7.5px;height:7px;background:#0d2537;"></div>
<div class="a" style="left:894.0px;top:186px;width:7.5px;height:7px;background:#0d2537;"></div>
<div class="a" style="left:901.5px;top:186px;width:7.5px;height:7px;background:#0d2537;"></div>
<div class="a" style="left:879.0px;top:193px;width:7.5px;height:7px;background:#0c2234;"></div>
<div class="a" style="left:886.5px;top:193px;width:7.5px;height:7px;background:#333f4c;"></div>
<div class="a" style="left:894.0px;top:193px;width:7.5px;height:7px;background:#2f3b48;"></div>
<div class="a" style="left:901.5px;top:193px;width:7.5px;height:7px;background:#2f3b48;"></div>
<div class="a" style="left:879.0px;top:200px;width:7.5px;height:7px;background:#4a5560;"></div>
<div class="a" style="left:886.5px;top:200px;width:7.5px;height:7px;background:#7a8590;"></div>
<div class="a" style="left:894.0px;top:200px;width:7.5px;height:7px;background:#5e6974;"></div>
<div class="a" style="left:901.5px;top:200px;width:7.5px;height:7px;background:#6b7681;"></div>
<div class="a" style="left:879.0px;top:207px;width:7.5px;height:7px;background:#0b2133;"></div>
<div class="a" style="left:886.5px;top:207px;width:7.5px;height:7px;background:#0d2537;"></div>
<div class="a" style="left:894.0px;top:207px;width:7.5px;height:7px;background:#0d2537;"></div>
<div class="a" style="left:901.5px;top:207px;width:7.5px;height:7px;background:#0d2537;"></div>
<div class="a" style="left:879.0px;top:214px;width:7.5px;height:7px;background:#0c2234;"></div>
<div class="a" style="left:886.5px;top:214px;width:7.5px;height:7px;background:#0e2638;"></div>
<div class="a" style="left:894.0px;top:214px;width:7.5px;height:7px;background:#0e2638;"></div>
<div class="a" style="left:901.5px;top:214px;width:7.5px;height:7px;background:#0e2638;"></div>
<div class="a" style="left:879.0px;top:221px;width:7.5px;height:7px;background:#3a4a55;"></div>
<div class="a" style="left:886.5px;top:221px;width:7.5px;height:7px;background:#6d7883;"></div>
<div class="a" style="left:894.0px;top:221px;width:7.5px;height:7px;background:#55606b;"></div>
<div class="a" style="left:901.5px;top:221px;width:7.5px;height:7px;background:#5d6873;"></div>
<div class="a" style="left:879.0px;top:228px;width:7.5px;height:7px;background:#163a3a;"></div>
<div class="a" style="left:886.5px;top:228px;width:7.5px;height:7px;background:#48535e;"></div>
<div class="a" style="left:894.0px;top:228px;width:7.5px;height:7px;background:#4a5560;"></div>
<div class="a" style="left:901.5px;top:228px;width:7.5px;height:7px;background:#56616c;"></div>
<div class="a" style="left:879.0px;top:235px;width:7.5px;height:7px;background:#0b2133;"></div>
<div class="a" style="left:886.5px;top:235px;width:7.5px;height:7px;background:#0d2537;"></div>
<div class="a" style="left:894.0px;top:235px;width:7.5px;height:7px;background:#0d2537;"></div>
<div class="a" style="left:901.5px;top:235px;width:7.5px;height:7px;background:#0d2537;"></div>
<div class="a" style="left:879.0px;top:242px;width:7.5px;height:7px;background:#0c2234;"></div>
<div class="a" style="left:886.5px;top:242px;width:7.5px;height:7px;background:#333f4c;"></div>
<div class="a" style="left:894.0px;top:242px;width:7.5px;height:7px;background:#3a4651;"></div>
<div class="a" style="left:901.5px;top:242px;width:7.5px;height:7px;background:#333f4c;"></div>
<div class="a" style="left:879.0px;top:249px;width:7.5px;height:7px;background:#0c2234;"></div>
<div class="a" style="left:886.5px;top:249px;width:7.5px;height:7px;background:#5b6671;"></div>
<div class="a" style="left:894.0px;top:249px;width:7.5px;height:7px;background:#606b76;"></div>
<div class="a" style="left:901.5px;top:249px;width:7.5px;height:7px;background:#6a7580;"></div>
<div class="a" style="left:879.0px;top:256px;width:7.5px;height:7px;background:#0b2133;"></div>
<div class="a" style="left:886.5px;top:256px;width:7.5px;height:7px;background:#0d2537;"></div>
<div class="a" style="left:894.0px;top:256px;width:7.5px;height:7px;background:#0d2537;"></div>
<div class="a" style="left:901.5px;top:256px;width:7.5px;height:7px;background:#0d2537;"></div>
<div class="a" style="left:879.0px;top:263px;width:7.5px;height:7px;background:#0c2234;"></div>
<div class="a" style="left:886.5px;top:263px;width:7.5px;height:7px;background:#0e2638;"></div>
<div class="a" style="left:894.0px;top:263px;width:7.5px;height:7px;background:#0e2638;"></div>
<div class="a" style="left:901.5px;top:263px;width:7.5px;height:7px;background:#0e2638;"></div>
<div class="a" style="left:879.0px;top:270px;width:7.5px;height:7px;background:#3d4a55;"></div>
<div class="a" style="left:886.5px;top:270px;width:7.5px;height:7px;background:#7a8590;"></div>
<div class="a" style="left:894.0px;top:270px;width:7.5px;height:7px;background:#5b6671;"></div>
<div class="a" style="left:901.5px;top:270px;width:7.5px;height:7px;background:#6b7681;"></div>
<div class="a" style="left:879.0px;top:277px;width:7.5px;height:7px;background:#12372f;"></div>
<div class="a" style="left:886.5px;top:277px;width:7.5px;height:7px;background:#48535e;"></div>
<div class="a" style="left:894.0px;top:277px;width:7.5px;height:7px;background:#4a5560;"></div>
<div class="a" style="left:901.5px;top:277px;width:7.5px;height:7px;background:#56616c;"></div>
<div class="a" style="left:879.0px;top:284px;width:7.5px;height:7px;background:#0b2133;"></div>
<div class="a" style="left:886.5px;top:284px;width:7.5px;height:7px;background:#0d2537;"></div>
<div class="a" style="left:894.0px;top:284px;width:7.5px;height:7px;background:#0d2537;"></div>
<div class="a" style="left:901.5px;top:284px;width:7.5px;height:7px;background:#0d2537;"></div>
<div class="a" style="left:879.0px;top:291px;width:7.5px;height:7px;background:#0c2234;"></div>
<div class="a" style="left:886.5px;top:291px;width:7.5px;height:7px;background:#4a5560;"></div>
<div class="a" style="left:894.0px;top:291px;width:7.5px;height:7px;background:#4a5560;"></div>
<div class="a" style="left:901.5px;top:291px;width:7.5px;height:7px;background:#4a5560;"></div>
<div class="a" style="left:879.0px;top:298px;width:7.5px;height:7px;background:#0c2234;"></div>
<div class="a" style="left:886.5px;top:298px;width:7.5px;height:7px;background:#555f6a;"></div>
<div class="a" style="left:894.0px;top:298px;width:7.5px;height:7px;background:#5b6671;"></div>
<div class="a" style="left:901.5px;top:298px;width:7.5px;height:7px;background:#606b76;"></div>
<div class="a" style="left:879.0px;top:305px;width:7.5px;height:7px;background:#0b2133;"></div>
<div class="a" style="left:886.5px;top:305px;width:7.5px;height:7px;background:#0d2537;"></div>
<div class="a" style="left:894.0px;top:305px;width:7.5px;height:7px;background:#0d2537;"></div>
<div class="a" style="left:901.5px;top:305px;width:7.5px;height:7px;background:#0d2537;"></div>
<div class="a" style="left:879.0px;top:312px;width:7.5px;height:7px;background:#1e6a34;"></div>
<div class="a" style="left:886.5px;top:312px;width:7.5px;height:7px;background:#1e6a34;"></div>
<div class="a" style="left:894.0px;top:312px;width:7.5px;height:7px;background:#1a5a30;"></div>
<div class="a" style="left:901.5px;top:312px;width:7.5px;height:7px;background:#0d2537;"></div>
<div class="a" style="left:879.0px;top:319px;width:7.5px;height:7px;background:#4cc45a;"></div>
<div class="a" style="left:886.5px;top:319px;width:7.5px;height:7px;background:#6ee07a;"></div>
<div class="a" style="left:894.0px;top:319px;width:7.5px;height:7px;background:#4cc45a;"></div>
<div class="a" style="left:901.5px;top:319px;width:7.5px;height:7px;background:#3a4651;"></div>
<div class="a" style="left:879.0px;top:326px;width:7.5px;height:7px;background:#3a9a48;"></div>
<div class="a" style="left:886.5px;top:326px;width:7.5px;height:7px;background:#4cc45a;"></div>
<div class="a" style="left:894.0px;top:326px;width:7.5px;height:7px;background:#3a9a48;"></div>
<div class="a" style="left:901.5px;top:326px;width:7.5px;height:7px;background:#333f4c;"></div>
<div class="a" style="left:676px;top:620.5px;width:15.5px;height:15px;border-radius:3px;background:#1d68a2;border:1px solid #5a86a8"></div>
<div class="t" style="left:681.3px;top:623.8px;font-size:8.5px;line-height:8.5px;font-weight:bold;color:#f4f4f4;">1</div>
<div class="pn" style="left:969.5px;top:137.5px;width:302.5px;height:189.8px"></div>
<div class="a" style="left:970.5px;top:157.6px;width:300.5px;height:1.6px;background:#17517f;"></div>
<div class="t" style="left:977.0px;top:144.9px;font-size:9.6px;line-height:9.6px;font-weight:bold;color:#f0f0f0;letter-spacing:0.35px">Prędkość wiatru \ Moc</div>
<div class="a" style="left:1189.8px;top:139px;width:1.5px;height:20px;background:#17517f;"></div>
<div class="a" style="left:1224.7px;top:139px;width:1.5px;height:20px;background:#17517f;"></div>
<div class="t" style="left:1194.9px;top:144.9px;font-size:9.6px;line-height:9.6px;font-weight:bold;color:#f0f0f0;">Dzień</div>
<div class="t" style="left:1232.6px;top:145.3px;font-size:9.6px;line-height:9.6px;font-weight:normal;color:#e0e0e0;">Miesiąc</div>
<div class="a" style="left:1030.7px;top:167.8px;width:6.4px;height:6.4px;background:#2f6b3a;border:1px solid #c8c8c8"></div>
<div class="t" style="left:1041.5px;top:166.9px;font-size:8px;line-height:8px;font-weight:normal;color:#dcdcdc;letter-spacing:0.2px">Moc chwilowa</div>
<div class="a" style="left:1142.6px;top:167.8px;width:6.4px;height:6.4px;background:#1e5c7a;border:1px solid #c8c8c8"></div>
<div class="t" style="left:1153.5px;top:166.9px;font-size:8px;line-height:8px;font-weight:normal;color:#dcdcdc;letter-spacing:0.2px">Prędkość wiatru</div>
<div class="t" style="left:987.3px;top:181.9px;font-size:10px;line-height:10px;font-weight:normal;color:#d8d8d8;letter-spacing:0.3px">[MW]</div>
<div class="t" style="left:1232.0px;top:181.9px;font-size:10px;line-height:10px;font-weight:normal;color:#d8d8d8;">[m/s]</div>
<div class="a" style="left:978.7px;top:192px;width:8.1px;height:7px;background:#505a64;"></div>
<div class="a" style="left:986.8000000000001px;top:192px;width:8.1px;height:7px;background:#606a74;"></div>
<div class="a" style="left:994.9000000000001px;top:192px;width:8.1px;height:7px;background:#58626c;"></div>
<div class="a" style="left:978.7px;top:199px;width:8.1px;height:7px;background:#2f3a45;"></div>
<div class="a" style="left:986.8000000000001px;top:199px;width:8.1px;height:7px;background:#3a4550;"></div>
<div class="a" style="left:994.9000000000001px;top:199px;width:8.1px;height:7px;background:#333e49;"></div>
<div class="a" style="left:978.7px;top:213px;width:8.1px;height:7px;background:#58626c;"></div>
<div class="a" style="left:986.8000000000001px;top:213px;width:8.1px;height:7px;background:#6a747e;"></div>
<div class="a" style="left:994.9000000000001px;top:213px;width:8.1px;height:7px;background:#5d6771;"></div>
<div class="a" style="left:978.7px;top:220px;width:8.1px;height:7px;background:#3a4550;"></div>
<div class="a" style="left:986.8000000000001px;top:220px;width:8.1px;height:7px;background:#2c3742;"></div>
<div class="a" style="left:994.9000000000001px;top:220px;width:8.1px;height:7px;background:#333e49;"></div>
<div class="a" style="left:978.7px;top:227px;width:8.1px;height:7px;background:#2a3540;"></div>
<div class="a" style="left:986.8000000000001px;top:227px;width:8.1px;height:7px;background:#39444f;"></div>
<div class="a" style="left:994.9000000000001px;top:227px;width:8.1px;height:7px;background:#2d3843;"></div>
<div class="a" style="left:978.7px;top:234px;width:8.1px;height:7px;background:#5d6771;"></div>
<div class="a" style="left:986.8000000000001px;top:234px;width:8.1px;height:7px;background:#6a747e;"></div>
<div class="a" style="left:994.9000000000001px;top:234px;width:8.1px;height:7px;background:#7a848e;"></div>
<div class="a" style="left:978.7px;top:248px;width:8.1px;height:7px;background:#454f59;"></div>
<div class="a" style="left:986.8000000000001px;top:248px;width:8.1px;height:7px;background:#505a64;"></div>
<div class="a" style="left:994.9000000000001px;top:248px;width:8.1px;height:7px;background:#48525c;"></div>
<div class="a" style="left:978.7px;top:255px;width:8.1px;height:7px;background:#5a646e;"></div>
<div class="a" style="left:986.8000000000001px;top:255px;width:8.1px;height:7px;background:#656f79;"></div>
<div class="a" style="left:994.9000000000001px;top:255px;width:8.1px;height:7px;background:#6f7983;"></div>
<div class="a" style="left:978.7px;top:269px;width:8.1px;height:7px;background:#4a545e;"></div>
<div class="a" style="left:986.8000000000001px;top:269px;width:8.1px;height:7px;background:#58626c;"></div>
<div class="a" style="left:994.9000000000001px;top:269px;width:8.1px;height:7px;background:#3e4852;"></div>
<div class="a" style="left:978.7px;top:276px;width:8.1px;height:6px;background:#454f59;"></div>
<div class="a" style="left:986.8000000000001px;top:276px;width:8.1px;height:6px;background:#4f5963;"></div>
<div class="a" style="left:994.9000000000001px;top:276px;width:8.1px;height:6px;background:#3a444e;"></div>
<svg class="a" style="left:1000px;top:185px" width="270" height="125" viewBox="1000 185 270 125">
<g stroke="#1a4f75" stroke-width="1" stroke-dasharray="2.5 2.5">
<line x1="1027.5" y1="193" x2="1027.5" y2="290"/>
<line x1="1082.5" y1="193" x2="1082.5" y2="290"/>
<line x1="1138" y1="193" x2="1138" y2="290"/>
<line x1="1193.4" y1="193" x2="1193.4" y2="290"/>
</g>
<path d="M1010 290.5 L1010.0 265.8 L1010.8 260.8 L1011.6 252.9 L1012.4 241.7 L1013.2 230.7 L1014.0 220.8 L1014.8 214.7 L1015.6 215.3 L1016.4 217.4 L1017.2 223.2 L1018.0 236.2 L1018.8 242.2 L1019.6 250.1 L1020.4 254.8 L1021.2 249.0 L1022.0 238.5 L1022.8 236.6 L1023.6 233.6 L1024.4 235.3 L1025.2 241.9 L1026.0 247.2 L1026.8 250.0 L1027.6 259.0 L1028.4 264.5 L1029.2 267.0 L1030.0 267.1 L1030.8 272.1 L1031.6 271.6 L1032.4 274.0 L1033.2 275.8 L1034.0 276.1 L1034.8 278.1 L1035.6 276.8 L1036.4 279.6 L1037.2 279.0 L1038.0 282.1 L1038.8 282.7 L1039.6 280.2 L1040.4 281.3 L1041.2 282.2 L1042.0 284.8 L1042.8 281.8 L1043.6 281.9 L1044.4 279.4 L1045.2 279.0 L1046.0 277.0 L1046.8 275.5 L1047.6 275.1 L1048.4 274.5 L1049.2 275.3 L1050.0 273.8 L1050.8 271.4 L1051.6 267.6 L1052.4 265.7 L1053.2 268.9 L1054.0 271.2 L1054.8 275.1 L1055.6 275.2 L1056.4 274.5 L1057.2 272.7 L1058.0 272.9 L1058.8 269.9 L1059.6 271.9 L1060.4 270.4 L1061.2 269.2 L1062.0 268.4 L1062.8 272.0 L1063.6 272.9 L1064.4 269.4 L1065.2 273.1 L1066.0 271.9 L1066.8 271.3 L1067.6 271.2 L1068.4 272.1 L1069.2 271.5 L1070.0 267.5 L1070.8 269.6 L1071.6 266.9 L1072.4 270.9 L1073.2 270.2 L1074.0 273.7 L1074.8 273.9 L1075.6 271.6 L1076.4 273.6 L1077.2 270.4 L1078.0 269.1 L1078.8 272.1 L1079.6 270.3 L1080.4 271.7 L1081.2 273.3 L1082.0 274.9 L1082.8 274.7 L1083.6 276.4 L1084.4 282.2 L1085.2 282.0 L1086.0 285.4 L1086.8 284.9 L1087.6 282.3 L1088.4 282.4 L1089.2 282.4 L1090.0 282.6 L1090.8 282.6 L1091.6 282.6 L1092.4 283.0 L1093.2 284.6 L1094.0 282.8 L1094.8 282.7 L1095.6 283.7 L1096.4 281.3 L1097.2 281.2 L1098.0 283.9 L1098.8 281.6 L1099.6 281.4 L1100.4 279.1 L1101.2 281.2 L1102.0 282.4 L1102.8 280.3 L1103.6 283.3 L1104.4 283.5 L1105.2 280.7 L1106.0 283.0 L1106.8 282.1 L1107.6 282.8 L1107.7 290.5 Z" fill="#236f3e"/><path d="M1010 290.5 L1010.0 270.9 L1010.8 270.4 L1011.6 269.0 L1012.4 265.9 L1013.2 264.7 L1014.0 265.0 L1014.8 264.6 L1015.6 261.7 L1016.4 263.4 L1017.2 265.0 L1018.0 265.6 L1018.8 266.9 L1019.6 267.9 L1020.4 269.2 L1021.2 269.4 L1022.0 268.1 L1022.8 267.7 L1023.6 268.0 L1024.4 266.6 L1025.2 268.6 L1026.0 269.8 L1026.8 269.5 L1027.6 270.0 L1028.4 272.0 L1029.2 271.3 L1030.0 271.7 L1030.8 272.9 L1031.6 274.1 L1032.4 273.3 L1033.2 274.3 L1034.0 274.8 L1034.8 276.5 L1035.6 276.0 L1036.4 277.5 L1037.2 276.3 L1038.0 276.9 L1038.8 277.9 L1039.6 278.7 L1040.4 277.9 L1041.2 277.6 L1042.0 277.6 L1042.8 278.7 L1043.6 277.2 L1044.4 278.0 L1045.2 277.5 L1046.0 275.2 L1046.8 275.1 L1047.6 276.1 L1048.4 275.3 L1049.2 275.4 L1050.0 274.2 L1050.8 273.6 L1051.6 273.9 L1052.4 275.0 L1053.2 273.6 L1054.0 273.7 L1054.8 273.8 L1055.6 273.7 L1056.4 273.6 L1057.2 274.8 L1058.0 272.9 L1058.8 272.4 L1059.6 274.6 L1060.4 274.5 L1061.2 274.9 L1062.0 273.7 L1062.8 275.1 L1063.6 275.2 L1064.4 273.7 L1065.2 275.1 L1066.0 275.2 L1066.8 274.7 L1067.6 274.3 L1068.4 273.7 L1069.2 273.7 L1070.0 273.3 L1070.8 272.9 L1071.6 274.1 L1072.4 273.3 L1073.2 274.5 L1074.0 272.6 L1074.8 274.6 L1075.6 274.0 L1076.4 274.6 L1077.2 274.7 L1078.0 274.8 L1078.8 274.2 L1079.6 273.0 L1080.4 274.9 L1081.2 273.6 L1082.0 274.1 L1082.8 275.7 L1083.6 276.4 L1084.4 277.1 L1085.2 279.4 L1086.0 278.8 L1086.8 277.8 L1087.6 277.3 L1088.4 278.5 L1089.2 277.2 L1090.0 277.7 L1090.8 276.7 L1091.6 276.4 L1092.4 277.3 L1093.2 278.1 L1094.0 276.6 L1094.8 278.2 L1095.6 278.5 L1096.4 278.1 L1097.2 278.1 L1098.0 276.0 L1098.8 277.4 L1099.6 277.9 L1100.4 275.8 L1101.2 276.2 L1102.0 275.9 L1102.8 276.4 L1103.6 275.9 L1104.4 276.0 L1105.2 276.7 L1106.0 274.9 L1106.8 275.1 L1107.6 275.3 L1107.7 290.5 Z" fill="#1a5e70" fill-opacity="0.7"/><path d="M1010.0 270.9 L1010.8 270.4 L1011.6 269.0 L1012.4 265.9 L1013.2 264.7 L1014.0 265.0 L1014.8 264.6 L1015.6 261.7 L1016.4 263.4 L1017.2 265.0 L1018.0 265.6 L1018.8 266.9 L1019.6 267.9 L1020.4 269.2 L1021.2 269.4 L1022.0 268.1 L1022.8 267.7 L1023.6 268.0 L1024.4 266.6 L1025.2 268.6 L1026.0 269.8 L1026.8 269.5 L1027.6 270.0 L1028.4 272.0 L1029.2 271.3 L1030.0 271.7 L1030.8 272.9 L1031.6 274.1 L1032.4 273.3 L1033.2 274.3 L1034.0 274.8 L1034.8 276.5 L1035.6 276.0 L1036.4 277.5 L1037.2 276.3 L1038.0 276.9 L1038.8 277.9 L1039.6 278.7 L1040.4 277.9 L1041.2 277.6 L1042.0 277.6 L1042.8 278.7 L1043.6 277.2 L1044.4 278.0 L1045.2 277.5 L1046.0 275.2 L1046.8 275.1 L1047.6 276.1 L1048.4 275.3 L1049.2 275.4 L1050.0 274.2 L1050.8 273.6 L1051.6 273.9 L1052.4 275.0 L1053.2 273.6 L1054.0 273.7 L1054.8 273.8 L1055.6 273.7 L1056.4 273.6 L1057.2 274.8 L1058.0 272.9 L1058.8 272.4 L1059.6 274.6 L1060.4 274.5 L1061.2 274.9 L1062.0 273.7 L1062.8 275.1 L1063.6 275.2 L1064.4 273.7 L1065.2 275.1 L1066.0 275.2 L1066.8 274.7 L1067.6 274.3 L1068.4 273.7 L1069.2 273.7 L1070.0 273.3 L1070.8 272.9 L1071.6 274.1 L1072.4 273.3 L1073.2 274.5 L1074.0 272.6 L1074.8 274.6 L1075.6 274.0 L1076.4 274.6 L1077.2 274.7 L1078.0 274.8 L1078.8 274.2 L1079.6 273.0 L1080.4 274.9 L1081.2 273.6 L1082.0 274.1 L1082.8 275.7 L1083.6 276.4 L1084.4 277.1 L1085.2 279.4 L1086.0 278.8 L1086.8 277.8 L1087.6 277.3 L1088.4 278.5 L1089.2 277.2 L1090.0 277.7 L1090.8 276.7 L1091.6 276.4 L1092.4 277.3 L1093.2 278.1 L1094.0 276.6 L1094.8 278.2 L1095.6 278.5 L1096.4 278.1 L1097.2 278.1 L1098.0 276.0 L1098.8 277.4 L1099.6 277.9 L1100.4 275.8 L1101.2 276.2 L1102.0 275.9 L1102.8 276.4 L1103.6 275.9 L1104.4 276.0 L1105.2 276.7 L1106.0 274.9 L1106.8 275.1 L1107.6 275.3" fill="none" stroke="#1f6e98" stroke-width="1.3"/>
<g stroke="#e0e0e0" stroke-width="1" fill="none">
<path d="M1009.8 192 V290.6 H1230.4 V192"/>
</g>
<g stroke="#d0d0d0" stroke-width="1">
<line x1="1009.8" y1="285.7" x2="1011.8" y2="285.7"/><line x1="1009.8" y1="280.8" x2="1011.8" y2="280.8"/><line x1="1009.8" y1="275.9" x2="1011.8" y2="275.9"/><line x1="1009.8" y1="271.0" x2="1011.8" y2="271.0"/><line x1="1009.8" y1="266.1" x2="1011.8" y2="266.1"/><line x1="1009.8" y1="261.2" x2="1011.8" y2="261.2"/><line x1="1009.8" y1="256.3" x2="1011.8" y2="256.3"/><line x1="1009.8" y1="251.4" x2="1011.8" y2="251.4"/><line x1="1009.8" y1="246.5" x2="1011.8" y2="246.5"/><line x1="1009.8" y1="241.6" x2="1011.8" y2="241.6"/><line x1="1009.8" y1="236.7" x2="1011.8" y2="236.7"/><line x1="1009.8" y1="231.8" x2="1011.8" y2="231.8"/><line x1="1009.8" y1="226.9" x2="1011.8" y2="226.9"/><line x1="1009.8" y1="222.0" x2="1011.8" y2="222.0"/><line x1="1009.8" y1="217.1" x2="1011.8" y2="217.1"/><line x1="1009.8" y1="212.2" x2="1011.8" y2="212.2"/><line x1="1009.8" y1="207.3" x2="1011.8" y2="207.3"/><line x1="1009.8" y1="202.4" x2="1011.8" y2="202.4"/><line x1="1009.8" y1="197.5" x2="1011.8" y2="197.5"/><line x1="1009.8" y1="192.6" x2="1011.8" y2="192.6"/><line x1="1228.4" y1="285.7" x2="1230.4" y2="285.7"/><line x1="1228.4" y1="280.8" x2="1230.4" y2="280.8"/><line x1="1228.4" y1="275.9" x2="1230.4" y2="275.9"/><line x1="1228.4" y1="271.0" x2="1230.4" y2="271.0"/><line x1="1228.4" y1="266.1" x2="1230.4" y2="266.1"/><line x1="1228.4" y1="261.2" x2="1230.4" y2="261.2"/><line x1="1228.4" y1="256.3" x2="1230.4" y2="256.3"/><line x1="1228.4" y1="251.4" x2="1230.4" y2="251.4"/><line x1="1228.4" y1="246.5" x2="1230.4" y2="246.5"/><line x1="1228.4" y1="241.6" x2="1230.4" y2="241.6"/><line x1="1228.4" y1="236.7" x2="1230.4" y2="236.7"/><line x1="1228.4" y1="231.8" x2="1230.4" y2="231.8"/><line x1="1228.4" y1="226.9" x2="1230.4" y2="226.9"/><line x1="1228.4" y1="222.0" x2="1230.4" y2="222.0"/><line x1="1228.4" y1="217.1" x2="1230.4" y2="217.1"/><line x1="1228.4" y1="212.2" x2="1230.4" y2="212.2"/><line x1="1228.4" y1="207.3" x2="1230.4" y2="207.3"/><line x1="1228.4" y1="202.4" x2="1230.4" y2="202.4"/><line x1="1228.4" y1="197.5" x2="1230.4" y2="197.5"/><line x1="1228.4" y1="192.6" x2="1230.4" y2="192.6"/><line x1="1019.0" y1="290.6" x2="1019.0" y2="292.6"/><line x1="1028.2" y1="290.6" x2="1028.2" y2="292.6"/><line x1="1037.4" y1="290.6" x2="1037.4" y2="292.6"/><line x1="1046.6" y1="290.6" x2="1046.6" y2="292.6"/><line x1="1055.8" y1="290.6" x2="1055.8" y2="292.6"/><line x1="1065.0" y1="290.6" x2="1065.0" y2="292.6"/><line x1="1074.2" y1="290.6" x2="1074.2" y2="292.6"/><line x1="1083.4" y1="290.6" x2="1083.4" y2="292.6"/><line x1="1092.6" y1="290.6" x2="1092.6" y2="292.6"/><line x1="1101.8" y1="290.6" x2="1101.8" y2="292.6"/><line x1="1111.0" y1="290.6" x2="1111.0" y2="292.6"/><line x1="1120.2" y1="290.6" x2="1120.2" y2="292.6"/><line x1="1129.4" y1="290.6" x2="1129.4" y2="292.6"/><line x1="1138.6" y1="290.6" x2="1138.6" y2="292.6"/><line x1="1147.8" y1="290.6" x2="1147.8" y2="292.6"/><line x1="1157.0" y1="290.6" x2="1157.0" y2="292.6"/><line x1="1166.2" y1="290.6" x2="1166.2" y2="292.6"/><line x1="1175.4" y1="290.6" x2="1175.4" y2="292.6"/><line x1="1184.6" y1="290.6" x2="1184.6" y2="292.6"/><line x1="1193.8" y1="290.6" x2="1193.8" y2="292.6"/><line x1="1203.0" y1="290.6" x2="1203.0" y2="292.6"/><line x1="1212.2" y1="290.6" x2="1212.2" y2="292.6"/><line x1="1221.4" y1="290.6" x2="1221.4" y2="292.6"/>
</g>
</svg>
<div class="t" style="left:1236.8px;top:193.7px;font-size:9.2px;line-height:9.2px;font-weight:normal;color:#dedede;">40.00</div>
<div class="t" style="left:1236.8px;top:217.8px;font-size:9.2px;line-height:9.2px;font-weight:normal;color:#dedede;">30.00</div>
<div class="t" style="left:1236.8px;top:241.9px;font-size:9.2px;line-height:9.2px;font-weight:normal;color:#dedede;">20.00</div>
<div class="t" style="left:1236.8px;top:266.0px;font-size:9.2px;line-height:9.2px;font-weight:normal;color:#dedede;">10.00</div>
<div class="t" style="left:877.2px;width:300px;text-align:center;top:294.7px;font-size:9.2px;line-height:9.2px;font-weight:normal;color:#dedede;">02:00</div>
<div class="t" style="left:932.0px;width:300px;text-align:center;top:294.7px;font-size:9.2px;line-height:9.2px;font-weight:normal;color:#dedede;">08:00</div>
<div class="t" style="left:988.0px;width:300px;text-align:center;top:294.7px;font-size:9.2px;line-height:9.2px;font-weight:normal;color:#dedede;">14:00</div>
<div class="t" style="left:1043.4px;width:300px;text-align:center;top:294.7px;font-size:9.2px;line-height:9.2px;font-weight:normal;color:#dedede;">20:00</div>
<div class="pn" style="left:969.5px;top:338.1px;width:302.5px;height:313.4px"></div>
<div class="a" style="left:970.5px;top:355.8px;width:300.5px;height:1.6px;background:#17517f;"></div>
<div class="t" style="left:977.0px;top:343.4px;font-size:9.6px;line-height:9.6px;font-weight:bold;color:#f0f0f0;letter-spacing:0.35px">Powiadomienia</div>
<div class="a" style="left:979px;top:357px;width:140px;height:269px;background:#4a0a0d"></div>
<div class="a" style="left:993px;top:357px;width:7px;height:269px;background:#2e1820"></div>
<div class="a" style="left:1119px;top:357px;width:7px;height:269px;background:#2e1820"></div>
<div class="a" style="left:979px;top:357px;width:14px;height:269px;background:#08263a"></div>
<div class="a" style="left:1000px;top:357px;width:119px;height:7px;background:#3c1016"></div>
<div class="a" style="left:979px;top:357px;width:14px;height:7px;background:#2c1c2c"></div>
<div class="a" style="left:993px;top:357px;width:7px;height:7px;background:#2a1a24"></div>
<div class="a" style="left:1119px;top:357px;width:7px;height:7px;background:#2a1a24"></div>
<div class="a" style="left:1000px;top:364px;width:7px;height:7px;background:#721a1c"></div>
<div class="a" style="left:1007px;top:364px;width:7px;height:7px;background:#661416"></div>
<div class="a" style="left:1014px;top:364px;width:7px;height:7px;background:#7e1e20"></div>
<div class="a" style="left:1021px;top:364px;width:7px;height:7px;background:#7a1c1e"></div>
<div class="a" style="left:1028px;top:364px;width:7px;height:7px;background:#761a1c"></div>
<div class="a" style="left:1035px;top:364px;width:7px;height:7px;background:#761a1c"></div>
<div class="a" style="left:1042px;top:364px;width:7px;height:7px;background:#6c1719"></div>
<div class="a" style="left:1049px;top:364px;width:7px;height:7px;background:#6a1618"></div>
<div class="a" style="left:1056px;top:364px;width:7px;height:7px;background:#761a1c"></div>
<div class="a" style="left:1063px;top:364px;width:7px;height:7px;background:#5a1012"></div>
<div class="a" style="left:1070px;top:364px;width:7px;height:7px;background:#6a1618"></div>
<div class="a" style="left:1077px;top:364px;width:7px;height:7px;background:#761a1c"></div>
<div class="a" style="left:1084px;top:364px;width:7px;height:7px;background:#6a1618"></div>
<div class="a" style="left:1091px;top:364px;width:7px;height:7px;background:#661416"></div>
<div class="a" style="left:1098px;top:364px;width:7px;height:7px;background:#761a1c"></div>
<div class="a" style="left:1105px;top:364px;width:7px;height:7px;background:#761a1c"></div>
<div class="a" style="left:1112px;top:364px;width:7px;height:7px;background:#4e0c0e"></div>
<div class="a" style="left:979px;top:364px;width:14px;height:7px;background:#7e1a22"></div>
<div class="a" style="left:1126px;top:364px;width:7px;height:7px;background:#64707a"></div>
<div class="a" style="left:1133px;top:364px;width:7px;height:7px;background:#525e68"></div>
<div class="a" style="left:1140px;top:364px;width:7px;height:7px;background:#64707a"></div>
<div class="a" style="left:1147px;top:364px;width:7px;height:7px;background:#7c8892"></div>
<div class="a" style="left:1154px;top:364px;width:7px;height:7px;background:#525e68"></div>
<div class="a" style="left:1161px;top:364px;width:7px;height:7px;background:#7c8892"></div>
<div class="a" style="left:1168px;top:364px;width:7px;height:7px;background:#7c8892"></div>
<div class="a" style="left:1175px;top:364px;width:7px;height:7px;background:#3e4a54"></div>
<div class="a" style="left:1182px;top:364px;width:7px;height:7px;background:#3e4a54"></div>
<div class="a" style="left:1189px;top:364px;width:7px;height:7px;background:#4c5862"></div>
<div class="a" style="left:1196px;top:364px;width:7px;height:7px;background:#4c5862"></div>
<div class="a" style="left:1203px;top:364px;width:7px;height:7px;background:#7c8892"></div>
<div class="a" style="left:1210px;top:364px;width:7px;height:7px;background:#505c66"></div>
<div class="a" style="left:979px;top:371px;width:14px;height:7px;background:#301c28"></div>
<div class="a" style="left:1126px;top:371px;width:7px;height:7px;background:#505c66"></div>
<div class="a" style="left:1133px;top:371px;width:7px;height:7px;background:#46525c"></div>
<div class="a" style="left:1140px;top:371px;width:7px;height:7px;background:#46525c"></div>
<div class="a" style="left:1147px;top:371px;width:7px;height:7px;background:#7c8892"></div>
<div class="a" style="left:1154px;top:371px;width:7px;height:7px;background:#505c66"></div>
<div class="a" style="left:1161px;top:371px;width:7px;height:7px;background:#5e6a74"></div>
<div class="a" style="left:1168px;top:371px;width:7px;height:7px;background:#6a7680"></div>
<div class="a" style="left:1175px;top:371px;width:7px;height:7px;background:#525e68"></div>
<div class="a" style="left:1182px;top:371px;width:7px;height:7px;background:#5c6872"></div>
<div class="a" style="left:1189px;top:371px;width:7px;height:7px;background:#46525c"></div>
<div class="a" style="left:1196px;top:371px;width:7px;height:7px;background:#727e88"></div>
<div class="a" style="left:1203px;top:371px;width:7px;height:7px;background:#5e6a74"></div>
<div class="a" style="left:1210px;top:371px;width:7px;height:7px;background:#58646e"></div>
<div class="a" style="left:1217px;top:371px;width:7px;height:7px;background:#46525c"></div>
<div class="a" style="left:1224px;top:371px;width:7px;height:7px;background:#36424c"></div>
<div class="a" style="left:1000px;top:378px;width:119px;height:7px;background:#3c1016"></div>
<div class="a" style="left:979px;top:378px;width:14px;height:7px;background:#0c2436"></div>
<div class="a" style="left:993px;top:378px;width:7px;height:7px;background:#2a1a24"></div>
<div class="a" style="left:1119px;top:378px;width:7px;height:7px;background:#2a1a24"></div>
<div class="a" style="left:1126px;top:378px;width:7px;height:7px;background:#6a7680"></div>
<div class="a" style="left:1133px;top:378px;width:7px;height:7px;background:#46525c"></div>
<div class="a" style="left:1140px;top:378px;width:7px;height:7px;background:#5e6a74"></div>
<div class="a" style="left:1147px;top:378px;width:7px;height:7px;background:#6a7680"></div>
<div class="a" style="left:1154px;top:378px;width:7px;height:7px;background:#46525c"></div>
<div class="a" style="left:1161px;top:378px;width:7px;height:7px;background:#505c66"></div>
<div class="a" style="left:1168px;top:378px;width:7px;height:7px;background:#58646e"></div>
<div class="a" style="left:1175px;top:378px;width:7px;height:7px;background:#6a7680"></div>
<div class="a" style="left:1182px;top:378px;width:7px;height:7px;background:#505c66"></div>
<div class="a" style="left:1189px;top:378px;width:7px;height:7px;background:#343e4a"></div>
<div class="a" style="left:1196px;top:378px;width:7px;height:7px;background:#242e3a"></div>
<div class="a" style="left:1203px;top:378px;width:7px;height:7px;background:#5c6872"></div>
<div class="a" style="left:1210px;top:378px;width:7px;height:7px;background:#6a7680"></div>
<div class="a" style="left:1217px;top:378px;width:7px;height:7px;background:#3e4854"></div>
<div class="a" style="left:1224px;top:378px;width:7px;height:7px;background:#36424c"></div>
<div class="a" style="left:1000px;top:385px;width:7px;height:7px;background:#721a1c"></div>
<div class="a" style="left:1007px;top:385px;width:7px;height:7px;background:#7a1c1e"></div>
<div class="a" style="left:1014px;top:385px;width:7px;height:7px;background:#7e1e20"></div>
<div class="a" style="left:1021px;top:385px;width:7px;height:7px;background:#661416"></div>
<div class="a" style="left:1028px;top:385px;width:7px;height:7px;background:#661416"></div>
<div class="a" style="left:1035px;top:385px;width:7px;height:7px;background:#761a1c"></div>
<div class="a" style="left:1042px;top:385px;width:7px;height:7px;background:#661416"></div>
<div class="a" style="left:1049px;top:385px;width:7px;height:7px;background:#661416"></div>
<div class="a" style="left:1056px;top:385px;width:7px;height:7px;background:#661416"></div>
<div class="a" style="left:1063px;top:385px;width:7px;height:7px;background:#5a1012"></div>
<div class="a" style="left:1070px;top:385px;width:7px;height:7px;background:#661416"></div>
<div class="a" style="left:1077px;top:385px;width:7px;height:7px;background:#761a1c"></div>
<div class="a" style="left:1084px;top:385px;width:7px;height:7px;background:#7e1e20"></div>
<div class="a" style="left:1091px;top:385px;width:7px;height:7px;background:#6c1719"></div>
<div class="a" style="left:1098px;top:385px;width:7px;height:7px;background:#6a1618"></div>
<div class="a" style="left:1105px;top:385px;width:7px;height:7px;background:#661416"></div>
<div class="a" style="left:1112px;top:385px;width:7px;height:7px;background:#4e0c0e"></div>
<div class="a" style="left:979px;top:385px;width:14px;height:7px;background:#7e1a22"></div>
<div class="a" style="left:1126px;top:385px;width:7px;height:7px;background:#58646e"></div>
<div class="a" style="left:1133px;top:385px;width:7px;height:7px;background:#4c5862"></div>
<div class="a" style="left:1140px;top:385px;width:7px;height:7px;background:#5e6a74"></div>
<div class="a" style="left:1147px;top:385px;width:7px;height:7px;background:#5e6a74"></div>
<div class="a" style="left:1154px;top:385px;width:7px;height:7px;background:#5c6872"></div>
<div class="a" style="left:1161px;top:385px;width:7px;height:7px;background:#7c8892"></div>
<div class="a" style="left:1168px;top:385px;width:7px;height:7px;background:#5c6872"></div>
<div class="a" style="left:1175px;top:385px;width:7px;height:7px;background:#505c66"></div>
<div class="a" style="left:1182px;top:385px;width:7px;height:7px;background:#64707a"></div>
<div class="a" style="left:1189px;top:385px;width:7px;height:7px;background:#64707a"></div>
<div class="a" style="left:1196px;top:385px;width:7px;height:7px;background:#505c66"></div>
<div class="a" style="left:1203px;top:385px;width:7px;height:7px;background:#525e68"></div>
<div class="a" style="left:1210px;top:385px;width:7px;height:7px;background:#525e68"></div>
<div class="a" style="left:1217px;top:385px;width:7px;height:7px;background:#46525c"></div>
<div class="a" style="left:1224px;top:385px;width:7px;height:7px;background:#3e4a54"></div>
<div class="a" style="left:1231px;top:385px;width:7px;height:7px;background:#36424c"></div>
<div class="a" style="left:1000px;top:392px;width:7px;height:7px;background:#6a1618"></div>
<div class="a" style="left:1007px;top:392px;width:7px;height:7px;background:#5e1214"></div>
<div class="a" style="left:1014px;top:392px;width:7px;height:7px;background:#5e1214"></div>
<div class="a" style="left:1021px;top:392px;width:7px;height:7px;background:#641416"></div>
<div class="a" style="left:1028px;top:392px;width:7px;height:7px;background:#581012"></div>
<div class="a" style="left:1035px;top:392px;width:7px;height:7px;background:#641416"></div>
<div class="a" style="left:1042px;top:392px;width:7px;height:7px;background:#6a1618"></div>
<div class="a" style="left:1049px;top:392px;width:7px;height:7px;background:#6a1618"></div>
<div class="a" style="left:1056px;top:392px;width:7px;height:7px;background:#6a1618"></div>
<div class="a" style="left:1063px;top:392px;width:7px;height:7px;background:#581012"></div>
<div class="a" style="left:1070px;top:392px;width:7px;height:7px;background:#5e1214"></div>
<div class="a" style="left:1077px;top:392px;width:7px;height:7px;background:#5e1214"></div>
<div class="a" style="left:1084px;top:392px;width:7px;height:7px;background:#581012"></div>
<div class="a" style="left:1091px;top:392px;width:7px;height:7px;background:#581012"></div>
<div class="a" style="left:1098px;top:392px;width:7px;height:7px;background:#581012"></div>
<div class="a" style="left:1105px;top:392px;width:7px;height:7px;background:#581012"></div>
<div class="a" style="left:1112px;top:392px;width:7px;height:7px;background:#4e0c0e"></div>
<div class="a" style="left:979px;top:392px;width:14px;height:7px;background:#661a26"></div>
<div class="a" style="left:1126px;top:392px;width:7px;height:7px;background:#58646e"></div>
<div class="a" style="left:1133px;top:392px;width:7px;height:7px;background:#46525c"></div>
<div class="a" style="left:1140px;top:392px;width:7px;height:7px;background:#5c6872"></div>
<div class="a" style="left:1147px;top:392px;width:7px;height:7px;background:#5c6872"></div>
<div class="a" style="left:1154px;top:392px;width:7px;height:7px;background:#3e4a54"></div>
<div class="a" style="left:1161px;top:392px;width:7px;height:7px;background:#727e88"></div>
<div class="a" style="left:1168px;top:392px;width:7px;height:7px;background:#5c6872"></div>
<div class="a" style="left:1175px;top:392px;width:7px;height:7px;background:#3e4a54"></div>
<div class="a" style="left:1182px;top:392px;width:7px;height:7px;background:#58646e"></div>
<div class="a" style="left:1189px;top:392px;width:7px;height:7px;background:#46525c"></div>
<div class="a" style="left:1196px;top:392px;width:7px;height:7px;background:#58646e"></div>
<div class="a" style="left:1203px;top:392px;width:7px;height:7px;background:#4c5862"></div>
<div class="a" style="left:1210px;top:392px;width:7px;height:7px;background:#525e68"></div>
<div class="a" style="left:1217px;top:392px;width:7px;height:7px;background:#727e88"></div>
<div class="a" style="left:1224px;top:392px;width:7px;height:7px;background:#525e68"></div>
<div class="a" style="left:1231px;top:392px;width:7px;height:7px;background:#525e68"></div>
<div class="a" style="left:1126px;top:399px;width:7px;height:7px;background:#5c6872"></div>
<div class="a" style="left:1133px;top:399px;width:7px;height:7px;background:#525e68"></div>
<div class="a" style="left:1140px;top:399px;width:7px;height:7px;background:#5e6a74"></div>
<div class="a" style="left:1147px;top:399px;width:7px;height:7px;background:#3e4a54"></div>
<div class="a" style="left:1154px;top:399px;width:7px;height:7px;background:#6a7680"></div>
<div class="a" style="left:1161px;top:399px;width:7px;height:7px;background:#5c6872"></div>
<div class="a" style="left:1168px;top:399px;width:7px;height:7px;background:#5e6a74"></div>
<div class="a" style="left:1175px;top:399px;width:7px;height:7px;background:#5c6872"></div>
<div class="a" style="left:1182px;top:399px;width:7px;height:7px;background:#5e6a74"></div>
<div class="a" style="left:1189px;top:399px;width:7px;height:7px;background:#46525c"></div>
<div class="a" style="left:1196px;top:399px;width:7px;height:7px;background:#525e68"></div>
<div class="a" style="left:1203px;top:399px;width:7px;height:7px;background:#6a7680"></div>
<div class="a" style="left:1210px;top:399px;width:7px;height:7px;background:#7c8892"></div>
<div class="a" style="left:1217px;top:399px;width:7px;height:7px;background:#36424c"></div>
<div class="a" style="left:1126px;top:406px;width:7px;height:7px;background:#505c66"></div>
<div class="a" style="left:1133px;top:406px;width:7px;height:7px;background:#505c66"></div>
<div class="a" style="left:1140px;top:406px;width:7px;height:7px;background:#64707a"></div>
<div class="a" style="left:1147px;top:406px;width:7px;height:7px;background:#525e68"></div>
<div class="a" style="left:1154px;top:406px;width:7px;height:7px;background:#4c5862"></div>
<div class="a" style="left:1161px;top:406px;width:7px;height:7px;background:#505c66"></div>
<div class="a" style="left:1168px;top:406px;width:7px;height:7px;background:#5c6872"></div>
<div class="a" style="left:1175px;top:406px;width:7px;height:7px;background:#64707a"></div>
<div class="a" style="left:1182px;top:406px;width:7px;height:7px;background:#36424c"></div>
<div class="a" style="left:1000px;top:413px;width:119px;height:7px;background:#3c1016"></div>
<div class="a" style="left:979px;top:413px;width:14px;height:7px;background:#0c2436"></div>
<div class="a" style="left:993px;top:413px;width:7px;height:7px;background:#2a1a24"></div>
<div class="a" style="left:1119px;top:413px;width:7px;height:7px;background:#2a1a24"></div>
<div class="a" style="left:1126px;top:413px;width:7px;height:7px;background:#26323c"></div>
<div class="a" style="left:1133px;top:413px;width:7px;height:7px;background:#3a4450"></div>
<div class="a" style="left:1140px;top:413px;width:7px;height:7px;background:#7c8892"></div>
<div class="a" style="left:1147px;top:413px;width:7px;height:7px;background:#5e6a74"></div>
<div class="a" style="left:1154px;top:413px;width:7px;height:7px;background:#26323c"></div>
<div class="a" style="left:1161px;top:413px;width:7px;height:7px;background:#505c66"></div>
<div class="a" style="left:1168px;top:413px;width:7px;height:7px;background:#4c5862"></div>
<div class="a" style="left:1175px;top:413px;width:7px;height:7px;background:#18222e"></div>
<div class="a" style="left:1182px;top:413px;width:7px;height:7px;background:#3e4854"></div>
<div class="a" style="left:1000px;top:420px;width:7px;height:7px;background:#7e1e20"></div>
<div class="a" style="left:1007px;top:420px;width:7px;height:7px;background:#6c1719"></div>
<div class="a" style="left:1014px;top:420px;width:7px;height:7px;background:#661416"></div>
<div class="a" style="left:1021px;top:420px;width:7px;height:7px;background:#761a1c"></div>
<div class="a" style="left:1028px;top:420px;width:7px;height:7px;background:#7a1c1e"></div>
<div class="a" style="left:1035px;top:420px;width:7px;height:7px;background:#721a1c"></div>
<div class="a" style="left:1042px;top:420px;width:7px;height:7px;background:#7e1e20"></div>
<div class="a" style="left:1049px;top:420px;width:7px;height:7px;background:#7a1c1e"></div>
<div class="a" style="left:1056px;top:420px;width:7px;height:7px;background:#6a1618"></div>
<div class="a" style="left:1063px;top:420px;width:7px;height:7px;background:#5a1012"></div>
<div class="a" style="left:1070px;top:420px;width:7px;height:7px;background:#6a1618"></div>
<div class="a" style="left:1077px;top:420px;width:7px;height:7px;background:#7e1e20"></div>
<div class="a" style="left:1084px;top:420px;width:7px;height:7px;background:#6c1719"></div>
<div class="a" style="left:1091px;top:420px;width:7px;height:7px;background:#6a1618"></div>
<div class="a" style="left:1098px;top:420px;width:7px;height:7px;background:#661416"></div>
<div class="a" style="left:1105px;top:420px;width:7px;height:7px;background:#6a1618"></div>
<div class="a" style="left:1112px;top:420px;width:7px;height:7px;background:#4e0c0e"></div>
<div class="a" style="left:979px;top:420px;width:14px;height:7px;background:#7e1a22"></div>
<div class="a" style="left:1126px;top:420px;width:7px;height:7px;background:#4c5862"></div>
<div class="a" style="left:1133px;top:420px;width:7px;height:7px;background:#3e4a54"></div>
<div class="a" style="left:1140px;top:420px;width:7px;height:7px;background:#4c5862"></div>
<div class="a" style="left:1147px;top:420px;width:7px;height:7px;background:#4c5862"></div>
<div class="a" style="left:1154px;top:420px;width:7px;height:7px;background:#6a7680"></div>
<div class="a" style="left:1161px;top:420px;width:7px;height:7px;background:#46525c"></div>
<div class="a" style="left:1168px;top:420px;width:7px;height:7px;background:#5e6a74"></div>
<div class="a" style="left:1175px;top:420px;width:7px;height:7px;background:#727e88"></div>
<div class="a" style="left:1182px;top:420px;width:7px;height:7px;background:#46525c"></div>
<div class="a" style="left:1189px;top:420px;width:7px;height:7px;background:#3e4a54"></div>
<div class="a" style="left:1196px;top:420px;width:7px;height:7px;background:#58646e"></div>
<div class="a" style="left:1203px;top:420px;width:7px;height:7px;background:#46525c"></div>
<div class="a" style="left:1210px;top:420px;width:7px;height:7px;background:#26323c"></div>
<div class="a" style="left:1217px;top:420px;width:7px;height:7px;background:#46525c"></div>
<div class="a" style="left:1224px;top:420px;width:7px;height:7px;background:#7c8892"></div>
<div class="a" style="left:1231px;top:420px;width:7px;height:7px;background:#7c8892"></div>
<div class="a" style="left:1000px;top:427px;width:7px;height:7px;background:#581012"></div>
<div class="a" style="left:1007px;top:427px;width:7px;height:7px;background:#581012"></div>
<div class="a" style="left:1014px;top:427px;width:7px;height:7px;background:#641416"></div>
<div class="a" style="left:1021px;top:427px;width:7px;height:7px;background:#6a1618"></div>
<div class="a" style="left:1028px;top:427px;width:7px;height:7px;background:#641416"></div>
<div class="a" style="left:1035px;top:427px;width:7px;height:7px;background:#581012"></div>
<div class="a" style="left:1042px;top:427px;width:7px;height:7px;background:#641416"></div>
<div class="a" style="left:1049px;top:427px;width:7px;height:7px;background:#581012"></div>
<div class="a" style="left:1056px;top:427px;width:7px;height:7px;background:#5e1214"></div>
<div class="a" style="left:1063px;top:427px;width:7px;height:7px;background:#581012"></div>
<div class="a" style="left:1070px;top:427px;width:7px;height:7px;background:#581012"></div>
<div class="a" style="left:1077px;top:427px;width:7px;height:7px;background:#6a1618"></div>
<div class="a" style="left:1084px;top:427px;width:7px;height:7px;background:#5e1214"></div>
<div class="a" style="left:1091px;top:427px;width:7px;height:7px;background:#641416"></div>
<div class="a" style="left:1098px;top:427px;width:7px;height:7px;background:#581012"></div>
<div class="a" style="left:1105px;top:427px;width:7px;height:7px;background:#5e1214"></div>
<div class="a" style="left:1112px;top:427px;width:7px;height:7px;background:#4e0c0e"></div>
<div class="a" style="left:979px;top:427px;width:14px;height:7px;background:#661a26"></div>
<div class="a" style="left:1126px;top:427px;width:7px;height:7px;background:#525e68"></div>
<div class="a" style="left:1133px;top:427px;width:7px;height:7px;background:#46525c"></div>
<div class="a" style="left:1140px;top:427px;width:7px;height:7px;background:#4c5862"></div>
<div class="a" style="left:1147px;top:427px;width:7px;height:7px;background:#505c66"></div>
<div class="a" style="left:1154px;top:427px;width:7px;height:7px;background:#4c5862"></div>
<div class="a" style="left:1161px;top:427px;width:7px;height:7px;background:#4c5862"></div>
<div class="a" style="left:1168px;top:427px;width:7px;height:7px;background:#525e68"></div>
<div class="a" style="left:1175px;top:427px;width:7px;height:7px;background:#46525c"></div>
<div class="a" style="left:1182px;top:427px;width:7px;height:7px;background:#6a7680"></div>
<div class="a" style="left:1189px;top:427px;width:7px;height:7px;background:#505c66"></div>
<div class="a" style="left:1196px;top:427px;width:7px;height:7px;background:#4c5862"></div>
<div class="a" style="left:1203px;top:427px;width:7px;height:7px;background:#727e88"></div>
<div class="a" style="left:1210px;top:427px;width:7px;height:7px;background:#64707a"></div>
<div class="a" style="left:1217px;top:427px;width:7px;height:7px;background:#5e6a74"></div>
<div class="a" style="left:1224px;top:427px;width:7px;height:7px;background:#26323c"></div>
<div class="a" style="left:1231px;top:427px;width:7px;height:7px;background:#727e88"></div>
<div class="a" style="left:1126px;top:434px;width:7px;height:7px;background:#64707a"></div>
<div class="a" style="left:1133px;top:434px;width:7px;height:7px;background:#7c8892"></div>
<div class="a" style="left:1140px;top:434px;width:7px;height:7px;background:#46525c"></div>
<div class="a" style="left:1147px;top:434px;width:7px;height:7px;background:#525e68"></div>
<div class="a" style="left:1154px;top:434px;width:7px;height:7px;background:#46525c"></div>
<div class="a" style="left:1161px;top:434px;width:7px;height:7px;background:#26323c"></div>
<div class="a" style="left:1168px;top:434px;width:7px;height:7px;background:#4c5862"></div>
<div class="a" style="left:1175px;top:434px;width:7px;height:7px;background:#4c5862"></div>
<div class="a" style="left:1182px;top:434px;width:7px;height:7px;background:#505c66"></div>
<div class="a" style="left:1189px;top:434px;width:7px;height:7px;background:#58646e"></div>
<div class="a" style="left:1196px;top:434px;width:7px;height:7px;background:#727e88"></div>
<div class="a" style="left:1203px;top:434px;width:7px;height:7px;background:#7c8892"></div>
<div class="a" style="left:1210px;top:434px;width:7px;height:7px;background:#5e6a74"></div>
<div class="a" style="left:1217px;top:434px;width:7px;height:7px;background:#3e4a54"></div>
<div class="a" style="left:1224px;top:434px;width:7px;height:7px;background:#4c5862"></div>
<div class="a" style="left:1231px;top:434px;width:7px;height:7px;background:#46525c"></div>
<div class="a" style="left:1238px;top:434px;width:7px;height:7px;background:#3e4a54"></div>
<div class="a" style="left:1126px;top:441px;width:7px;height:7px;background:#46525c"></div>
<div class="a" style="left:1133px;top:441px;width:7px;height:7px;background:#525e68"></div>
<div class="a" style="left:1140px;top:441px;width:7px;height:7px;background:#46525c"></div>
<div class="a" style="left:1147px;top:441px;width:7px;height:7px;background:#5e6a74"></div>
<div class="a" style="left:1154px;top:441px;width:7px;height:7px;background:#64707a"></div>
<div class="a" style="left:1161px;top:441px;width:7px;height:7px;background:#58646e"></div>
<div class="a" style="left:1168px;top:441px;width:7px;height:7px;background:#3e4a54"></div>
<div class="a" style="left:1175px;top:441px;width:7px;height:7px;background:#525e68"></div>
<div class="a" style="left:1182px;top:441px;width:7px;height:7px;background:#4c5862"></div>
<div class="a" style="left:1189px;top:441px;width:7px;height:7px;background:#4c5862"></div>
<div class="a" style="left:1196px;top:441px;width:7px;height:7px;background:#58646e"></div>
<div class="a" style="left:1203px;top:441px;width:7px;height:7px;background:#727e88"></div>
<div class="a" style="left:1210px;top:441px;width:7px;height:7px;background:#58646e"></div>
<div class="a" style="left:1217px;top:441px;width:7px;height:7px;background:#505c66"></div>
<div class="a" style="left:1224px;top:441px;width:7px;height:7px;background:#5e6a74"></div>
<div class="a" style="left:1000px;top:448px;width:119px;height:7px;background:#3c1016"></div>
<div class="a" style="left:979px;top:448px;width:14px;height:7px;background:#0c2436"></div>
<div class="a" style="left:993px;top:448px;width:7px;height:7px;background:#2a1a24"></div>
<div class="a" style="left:1119px;top:448px;width:7px;height:7px;background:#2a1a24"></div>
<div class="a" style="left:1126px;top:448px;width:7px;height:7px;background:#26323c"></div>
<div class="a" style="left:1133px;top:448px;width:7px;height:7px;background:#727e88"></div>
<div class="a" style="left:1140px;top:448px;width:7px;height:7px;background:#2e3844"></div>
<div class="a" style="left:1147px;top:448px;width:7px;height:7px;background:#505c66"></div>
<div class="a" style="left:1154px;top:448px;width:7px;height:7px;background:#37414d"></div>
<div class="a" style="left:1161px;top:448px;width:7px;height:7px;background:#2e3844"></div>
<div class="a" style="left:1168px;top:448px;width:7px;height:7px;background:#333d49"></div>
<div class="a" style="left:1175px;top:448px;width:7px;height:7px;background:#5e6a74"></div>
<div class="a" style="left:1182px;top:448px;width:7px;height:7px;background:#3e4a54"></div>
<div class="a" style="left:1189px;top:448px;width:7px;height:7px;background:#313b47"></div>
<div class="a" style="left:1196px;top:448px;width:7px;height:7px;background:#505c66"></div>
<div class="a" style="left:1203px;top:448px;width:7px;height:7px;background:#505c66"></div>
<div class="a" style="left:1210px;top:448px;width:7px;height:7px;background:#5c6872"></div>
<div class="a" style="left:1217px;top:448px;width:7px;height:7px;background:#2b3541"></div>
<div class="a" style="left:1224px;top:448px;width:7px;height:7px;background:#5e6a74"></div>
<div class="a" style="left:1000px;top:455px;width:7px;height:7px;background:#661416"></div>
<div class="a" style="left:1007px;top:455px;width:7px;height:7px;background:#761a1c"></div>
<div class="a" style="left:1014px;top:455px;width:7px;height:7px;background:#721a1c"></div>
<div class="a" style="left:1021px;top:455px;width:7px;height:7px;background:#661416"></div>
<div class="a" style="left:1028px;top:455px;width:7px;height:7px;background:#721a1c"></div>
<div class="a" style="left:1035px;top:455px;width:7px;height:7px;background:#661416"></div>
<div class="a" style="left:1042px;top:455px;width:7px;height:7px;background:#761a1c"></div>
<div class="a" style="left:1049px;top:455px;width:7px;height:7px;background:#721a1c"></div>
<div class="a" style="left:1056px;top:455px;width:7px;height:7px;background:#7e1e20"></div>
<div class="a" style="left:1063px;top:455px;width:7px;height:7px;background:#5a1012"></div>
<div class="a" style="left:1070px;top:455px;width:7px;height:7px;background:#7e1e20"></div>
<div class="a" style="left:1077px;top:455px;width:7px;height:7px;background:#721a1c"></div>
<div class="a" style="left:1084px;top:455px;width:7px;height:7px;background:#6a1618"></div>
<div class="a" style="left:1091px;top:455px;width:7px;height:7px;background:#7a1c1e"></div>
<div class="a" style="left:1098px;top:455px;width:7px;height:7px;background:#661416"></div>
<div class="a" style="left:1105px;top:455px;width:7px;height:7px;background:#661416"></div>
<div class="a" style="left:1112px;top:455px;width:7px;height:7px;background:#4e0c0e"></div>
<div class="a" style="left:979px;top:455px;width:14px;height:7px;background:#7e1a22"></div>
<div class="a" style="left:1126px;top:455px;width:7px;height:7px;background:#727e88"></div>
<div class="a" style="left:1133px;top:455px;width:7px;height:7px;background:#46525c"></div>
<div class="a" style="left:1140px;top:455px;width:7px;height:7px;background:#46525c"></div>
<div class="a" style="left:1147px;top:455px;width:7px;height:7px;background:#7c8892"></div>
<div class="a" style="left:1154px;top:455px;width:7px;height:7px;background:#3e4a54"></div>
<div class="a" style="left:1161px;top:455px;width:7px;height:7px;background:#505c66"></div>
<div class="a" style="left:1168px;top:455px;width:7px;height:7px;background:#7c8892"></div>
<div class="a" style="left:1175px;top:455px;width:7px;height:7px;background:#4c5862"></div>
<div class="a" style="left:1182px;top:455px;width:7px;height:7px;background:#5c6872"></div>
<div class="a" style="left:1189px;top:455px;width:7px;height:7px;background:#7c8892"></div>
<div class="a" style="left:1196px;top:455px;width:7px;height:7px;background:#5e6a74"></div>
<div class="a" style="left:1203px;top:455px;width:7px;height:7px;background:#6a7680"></div>
<div class="a" style="left:1000px;top:462px;width:7px;height:7px;background:#641416"></div>
<div class="a" style="left:1007px;top:462px;width:7px;height:7px;background:#5e1214"></div>
<div class="a" style="left:1014px;top:462px;width:7px;height:7px;background:#581012"></div>
<div class="a" style="left:1021px;top:462px;width:7px;height:7px;background:#641416"></div>
<div class="a" style="left:1028px;top:462px;width:7px;height:7px;background:#5e1214"></div>
<div class="a" style="left:1035px;top:462px;width:7px;height:7px;background:#641416"></div>
<div class="a" style="left:1042px;top:462px;width:7px;height:7px;background:#5e1214"></div>
<div class="a" style="left:1049px;top:462px;width:7px;height:7px;background:#5e1214"></div>
<div class="a" style="left:1056px;top:462px;width:7px;height:7px;background:#5e1214"></div>
<div class="a" style="left:1063px;top:462px;width:7px;height:7px;background:#641416"></div>
<div class="a" style="left:1070px;top:462px;width:7px;height:7px;background:#6a1618"></div>
<div class="a" style="left:1077px;top:462px;width:7px;height:7px;background:#5e1214"></div>
<div class="a" style="left:1084px;top:462px;width:7px;height:7px;background:#581012"></div>
<div class="a" style="left:1091px;top:462px;width:7px;height:7px;background:#581012"></div>
<div class="a" style="left:1098px;top:462px;width:7px;height:7px;background:#5e1214"></div>
<div class="a" style="left:1105px;top:462px;width:7px;height:7px;background:#5e1214"></div>
<div class="a" style="left:1112px;top:462px;width:7px;height:7px;background:#4e0c0e"></div>
<div class="a" style="left:979px;top:462px;width:14px;height:7px;background:#661a26"></div>
<div class="a" style="left:1126px;top:462px;width:7px;height:7px;background:#505c66"></div>
<div class="a" style="left:1133px;top:462px;width:7px;height:7px;background:#525e68"></div>
<div class="a" style="left:1140px;top:462px;width:7px;height:7px;background:#3e4a54"></div>
<div class="a" style="left:1147px;top:462px;width:7px;height:7px;background:#46525c"></div>
<div class="a" style="left:1154px;top:462px;width:7px;height:7px;background:#727e88"></div>
<div class="a" style="left:1161px;top:462px;width:7px;height:7px;background:#46525c"></div>
<div class="a" style="left:1168px;top:462px;width:7px;height:7px;background:#46525c"></div>
<div class="a" style="left:1175px;top:462px;width:7px;height:7px;background:#6a7680"></div>
<div class="a" style="left:1182px;top:462px;width:7px;height:7px;background:#46525c"></div>
<div class="a" style="left:1189px;top:462px;width:7px;height:7px;background:#525e68"></div>
<div class="a" style="left:1196px;top:462px;width:7px;height:7px;background:#525e68"></div>
<div class="a" style="left:1126px;top:469px;width:7px;height:7px;background:#6a7680"></div>
<div class="a" style="left:1133px;top:469px;width:7px;height:7px;background:#64707a"></div>
<div class="a" style="left:1140px;top:469px;width:7px;height:7px;background:#505c66"></div>
<div class="a" style="left:1147px;top:469px;width:7px;height:7px;background:#3e4a54"></div>
<div class="a" style="left:1154px;top:469px;width:7px;height:7px;background:#505c66"></div>
<div class="a" style="left:1161px;top:469px;width:7px;height:7px;background:#7c8892"></div>
<div class="a" style="left:1168px;top:469px;width:7px;height:7px;background:#58646e"></div>
<div class="a" style="left:1175px;top:469px;width:7px;height:7px;background:#5c6872"></div>
<div class="a" style="left:1182px;top:469px;width:7px;height:7px;background:#7c8892"></div>
<div class="a" style="left:1189px;top:469px;width:7px;height:7px;background:#6a7680"></div>
<div class="a" style="left:1196px;top:469px;width:7px;height:7px;background:#58646e"></div>
<div class="a" style="left:1203px;top:469px;width:7px;height:7px;background:#46525c"></div>
<div class="a" style="left:1210px;top:469px;width:7px;height:7px;background:#505c66"></div>
<div class="a" style="left:1217px;top:469px;width:7px;height:7px;background:#5c6872"></div>
<div class="a" style="left:1224px;top:469px;width:7px;height:7px;background:#6a7680"></div>
<div class="a" style="left:1231px;top:469px;width:7px;height:7px;background:#46525c"></div>
<div class="a" style="left:1238px;top:469px;width:7px;height:7px;background:#727e88"></div>
<div class="a" style="left:1000px;top:476px;width:119px;height:7px;background:#3c1016"></div>
<div class="a" style="left:979px;top:476px;width:14px;height:7px;background:#2c1c2c"></div>
<div class="a" style="left:993px;top:476px;width:7px;height:7px;background:#2a1a24"></div>
<div class="a" style="left:1119px;top:476px;width:7px;height:7px;background:#2a1a24"></div>
<div class="a" style="left:1126px;top:476px;width:7px;height:7px;background:#26323c"></div>
<div class="a" style="left:1133px;top:476px;width:7px;height:7px;background:#727e88"></div>
<div class="a" style="left:1140px;top:476px;width:7px;height:7px;background:#58646e"></div>
<div class="a" style="left:1147px;top:476px;width:7px;height:7px;background:#2e3844"></div>
<div class="a" style="left:1154px;top:476px;width:7px;height:7px;background:#5c6872"></div>
<div class="a" style="left:1161px;top:476px;width:7px;height:7px;background:#4c5862"></div>
<div class="a" style="left:1168px;top:476px;width:7px;height:7px;background:#58646e"></div>
<div class="a" style="left:1175px;top:476px;width:7px;height:7px;background:#525e68"></div>
<div class="a" style="left:1182px;top:476px;width:7px;height:7px;background:#18222e"></div>
<div class="a" style="left:1189px;top:476px;width:7px;height:7px;background:#6a7680"></div>
<div class="a" style="left:1196px;top:476px;width:7px;height:7px;background:#333d49"></div>
<div class="a" style="left:1203px;top:476px;width:7px;height:7px;background:#202a36"></div>
<div class="a" style="left:1000px;top:483px;width:7px;height:7px;background:#721a1c"></div>
<div class="a" style="left:1007px;top:483px;width:7px;height:7px;background:#6c1719"></div>
<div class="a" style="left:1014px;top:483px;width:7px;height:7px;background:#7e1e20"></div>
<div class="a" style="left:1021px;top:483px;width:7px;height:7px;background:#761a1c"></div>
<div class="a" style="left:1028px;top:483px;width:7px;height:7px;background:#661416"></div>
<div class="a" style="left:1035px;top:483px;width:7px;height:7px;background:#7a1c1e"></div>
<div class="a" style="left:1042px;top:483px;width:7px;height:7px;background:#761a1c"></div>
<div class="a" style="left:1049px;top:483px;width:7px;height:7px;background:#7a1c1e"></div>
<div class="a" style="left:1056px;top:483px;width:7px;height:7px;background:#721a1c"></div>
<div class="a" style="left:1063px;top:483px;width:7px;height:7px;background:#5a1012"></div>
<div class="a" style="left:1070px;top:483px;width:7px;height:7px;background:#721a1c"></div>
<div class="a" style="left:1077px;top:483px;width:7px;height:7px;background:#761a1c"></div>
<div class="a" style="left:1084px;top:483px;width:7px;height:7px;background:#7e1e20"></div>
<div class="a" style="left:1091px;top:483px;width:7px;height:7px;background:#7e1e20"></div>
<div class="a" style="left:1098px;top:483px;width:7px;height:7px;background:#6c1719"></div>
<div class="a" style="left:1105px;top:483px;width:7px;height:7px;background:#6a1618"></div>
<div class="a" style="left:1112px;top:483px;width:7px;height:7px;background:#4e0c0e"></div>
<div class="a" style="left:979px;top:483px;width:14px;height:7px;background:#7e1a22"></div>
<div class="a" style="left:1126px;top:483px;width:7px;height:7px;background:#46525c"></div>
<div class="a" style="left:1133px;top:483px;width:7px;height:7px;background:#64707a"></div>
<div class="a" style="left:1140px;top:483px;width:7px;height:7px;background:#3e4a54"></div>
<div class="a" style="left:1147px;top:483px;width:7px;height:7px;background:#3e4a54"></div>
<div class="a" style="left:1154px;top:483px;width:7px;height:7px;background:#58646e"></div>
<div class="a" style="left:1161px;top:483px;width:7px;height:7px;background:#4c5862"></div>
<div class="a" style="left:1168px;top:483px;width:7px;height:7px;background:#58646e"></div>
<div class="a" style="left:1175px;top:483px;width:7px;height:7px;background:#5e6a74"></div>
<div class="a" style="left:1182px;top:483px;width:7px;height:7px;background:#5e6a74"></div>
<div class="a" style="left:1189px;top:483px;width:7px;height:7px;background:#64707a"></div>
<div class="a" style="left:1196px;top:483px;width:7px;height:7px;background:#505c66"></div>
<div class="a" style="left:1203px;top:483px;width:7px;height:7px;background:#727e88"></div>
<div class="a" style="left:1210px;top:483px;width:7px;height:7px;background:#5c6872"></div>
<div class="a" style="left:1217px;top:483px;width:7px;height:7px;background:#5c6872"></div>
<div class="a" style="left:1224px;top:483px;width:7px;height:7px;background:#7c8892"></div>
<div class="a" style="left:1231px;top:483px;width:7px;height:7px;background:#505c66"></div>
<div class="a" style="left:1238px;top:483px;width:7px;height:7px;background:#6a7680"></div>
<div class="a" style="left:1126px;top:490px;width:7px;height:7px;background:#4c5862"></div>
<div class="a" style="left:1133px;top:490px;width:7px;height:7px;background:#64707a"></div>
<div class="a" style="left:1140px;top:490px;width:7px;height:7px;background:#58646e"></div>
<div class="a" style="left:1147px;top:490px;width:7px;height:7px;background:#5c6872"></div>
<div class="a" style="left:1154px;top:490px;width:7px;height:7px;background:#58646e"></div>
<div class="a" style="left:1161px;top:490px;width:7px;height:7px;background:#525e68"></div>
<div class="a" style="left:1168px;top:490px;width:7px;height:7px;background:#727e88"></div>
<div class="a" style="left:1175px;top:490px;width:7px;height:7px;background:#46525c"></div>
<div class="a" style="left:1182px;top:490px;width:7px;height:7px;background:#4c5862"></div>
<div class="a" style="left:1189px;top:490px;width:7px;height:7px;background:#727e88"></div>
<div class="a" style="left:1196px;top:490px;width:7px;height:7px;background:#6a7680"></div>
<div class="a" style="left:1203px;top:490px;width:7px;height:7px;background:#6a7680"></div>
<div class="a" style="left:1210px;top:490px;width:7px;height:7px;background:#6a7680"></div>
<div class="a" style="left:1217px;top:490px;width:7px;height:7px;background:#36424c"></div>
<div class="a" style="left:1000px;top:497px;width:119px;height:7px;background:#3c1016"></div>
<div class="a" style="left:979px;top:497px;width:14px;height:7px;background:#0c2436"></div>
<div class="a" style="left:993px;top:497px;width:7px;height:7px;background:#2a1a24"></div>
<div class="a" style="left:1119px;top:497px;width:7px;height:7px;background:#2a1a24"></div>
<div class="a" style="left:1126px;top:497px;width:7px;height:7px;background:#343e4a"></div>
<div class="a" style="left:1133px;top:497px;width:7px;height:7px;background:#5e6a74"></div>
<div class="a" style="left:1140px;top:497px;width:7px;height:7px;background:#3e4a54"></div>
<div class="a" style="left:1147px;top:497px;width:7px;height:7px;background:#37414d"></div>
<div class="a" style="left:1154px;top:497px;width:7px;height:7px;background:#313b47"></div>
<div class="a" style="left:1161px;top:497px;width:7px;height:7px;background:#58646e"></div>
<div class="a" style="left:1168px;top:497px;width:7px;height:7px;background:#505c66"></div>
<div class="a" style="left:1175px;top:497px;width:7px;height:7px;background:#525e68"></div>
<div class="a" style="left:1182px;top:497px;width:7px;height:7px;background:#64707a"></div>
<div class="a" style="left:1189px;top:497px;width:7px;height:7px;background:#58646e"></div>
<div class="a" style="left:1196px;top:497px;width:7px;height:7px;background:#3e4a54"></div>
<div class="a" style="left:1203px;top:497px;width:7px;height:7px;background:#6a7680"></div>
<div class="a" style="left:1210px;top:497px;width:7px;height:7px;background:#46525c"></div>
<div class="a" style="left:1217px;top:497px;width:7px;height:7px;background:#3e4854"></div>
<div class="a" style="left:1000px;top:504px;width:7px;height:7px;background:#761a1c"></div>
<div class="a" style="left:1007px;top:504px;width:7px;height:7px;background:#661416"></div>
<div class="a" style="left:1014px;top:504px;width:7px;height:7px;background:#661416"></div>
<div class="a" style="left:1021px;top:504px;width:7px;height:7px;background:#661416"></div>
<div class="a" style="left:1028px;top:504px;width:7px;height:7px;background:#6a1618"></div>
<div class="a" style="left:1035px;top:504px;width:7px;height:7px;background:#7a1c1e"></div>
<div class="a" style="left:1042px;top:504px;width:7px;height:7px;background:#761a1c"></div>
<div class="a" style="left:1049px;top:504px;width:7px;height:7px;background:#6c1719"></div>
<div class="a" style="left:1056px;top:504px;width:7px;height:7px;background:#7a1c1e"></div>
<div class="a" style="left:1063px;top:504px;width:7px;height:7px;background:#5a1012"></div>
<div class="a" style="left:1070px;top:504px;width:7px;height:7px;background:#7a1c1e"></div>
<div class="a" style="left:1077px;top:504px;width:7px;height:7px;background:#6c1719"></div>
<div class="a" style="left:1084px;top:504px;width:7px;height:7px;background:#6c1719"></div>
<div class="a" style="left:1091px;top:504px;width:7px;height:7px;background:#7e1e20"></div>
<div class="a" style="left:1098px;top:504px;width:7px;height:7px;background:#761a1c"></div>
<div class="a" style="left:1105px;top:504px;width:7px;height:7px;background:#6a1618"></div>
<div class="a" style="left:1112px;top:504px;width:7px;height:7px;background:#4e0c0e"></div>
<div class="a" style="left:979px;top:504px;width:14px;height:7px;background:#7e1a22"></div>
<div class="a" style="left:1126px;top:504px;width:7px;height:7px;background:#26323c"></div>
<div class="a" style="left:1133px;top:504px;width:7px;height:7px;background:#4c5862"></div>
<div class="a" style="left:1140px;top:504px;width:7px;height:7px;background:#3e4a54"></div>
<div class="a" style="left:1147px;top:504px;width:7px;height:7px;background:#58646e"></div>
<div class="a" style="left:1154px;top:504px;width:7px;height:7px;background:#505c66"></div>
<div class="a" style="left:1161px;top:504px;width:7px;height:7px;background:#505c66"></div>
<div class="a" style="left:1168px;top:504px;width:7px;height:7px;background:#46525c"></div>
<div class="a" style="left:1175px;top:504px;width:7px;height:7px;background:#58646e"></div>
<div class="a" style="left:1182px;top:504px;width:7px;height:7px;background:#7c8892"></div>
<div class="a" style="left:1189px;top:504px;width:7px;height:7px;background:#58646e"></div>
<div class="a" style="left:1196px;top:504px;width:7px;height:7px;background:#26323c"></div>
<div class="a" style="left:1203px;top:504px;width:7px;height:7px;background:#727e88"></div>
<div class="a" style="left:1210px;top:504px;width:7px;height:7px;background:#6a7680"></div>
<div class="a" style="left:1217px;top:504px;width:7px;height:7px;background:#5e6a74"></div>
<div class="a" style="left:1224px;top:504px;width:7px;height:7px;background:#525e68"></div>
<div class="a" style="left:1231px;top:504px;width:7px;height:7px;background:#36424c"></div>
<div class="a" style="left:1000px;top:511px;width:7px;height:7px;background:#581012"></div>
<div class="a" style="left:1007px;top:511px;width:7px;height:7px;background:#6a1618"></div>
<div class="a" style="left:1014px;top:511px;width:7px;height:7px;background:#5e1214"></div>
<div class="a" style="left:1021px;top:511px;width:7px;height:7px;background:#5e1214"></div>
<div class="a" style="left:1028px;top:511px;width:7px;height:7px;background:#641416"></div>
<div class="a" style="left:1035px;top:511px;width:7px;height:7px;background:#581012"></div>
<div class="a" style="left:1042px;top:511px;width:7px;height:7px;background:#581012"></div>
<div class="a" style="left:1049px;top:511px;width:7px;height:7px;background:#5e1214"></div>
<div class="a" style="left:1056px;top:511px;width:7px;height:7px;background:#6a1618"></div>
<div class="a" style="left:1063px;top:511px;width:7px;height:7px;background:#641416"></div>
<div class="a" style="left:1070px;top:511px;width:7px;height:7px;background:#581012"></div>
<div class="a" style="left:1077px;top:511px;width:7px;height:7px;background:#6a1618"></div>
<div class="a" style="left:1084px;top:511px;width:7px;height:7px;background:#641416"></div>
<div class="a" style="left:1091px;top:511px;width:7px;height:7px;background:#581012"></div>
<div class="a" style="left:1098px;top:511px;width:7px;height:7px;background:#5e1214"></div>
<div class="a" style="left:1105px;top:511px;width:7px;height:7px;background:#6a1618"></div>
<div class="a" style="left:1112px;top:511px;width:7px;height:7px;background:#4e0c0e"></div>
<div class="a" style="left:979px;top:511px;width:14px;height:7px;background:#661a26"></div>
<div class="a" style="left:1126px;top:511px;width:7px;height:7px;background:#5c6872"></div>
<div class="a" style="left:1133px;top:511px;width:7px;height:7px;background:#505c66"></div>
<div class="a" style="left:1140px;top:511px;width:7px;height:7px;background:#3e4a54"></div>
<div class="a" style="left:1147px;top:511px;width:7px;height:7px;background:#5c6872"></div>
<div class="a" style="left:1154px;top:511px;width:7px;height:7px;background:#46525c"></div>
<div class="a" style="left:1161px;top:511px;width:7px;height:7px;background:#525e68"></div>
<div class="a" style="left:1168px;top:511px;width:7px;height:7px;background:#525e68"></div>
<div class="a" style="left:1175px;top:511px;width:7px;height:7px;background:#525e68"></div>
<div class="a" style="left:1182px;top:511px;width:7px;height:7px;background:#58646e"></div>
<div class="a" style="left:1189px;top:511px;width:7px;height:7px;background:#7c8892"></div>
<div class="a" style="left:1196px;top:511px;width:7px;height:7px;background:#4c5862"></div>
<div class="a" style="left:1203px;top:511px;width:7px;height:7px;background:#6a7680"></div>
<div class="a" style="left:1210px;top:511px;width:7px;height:7px;background:#505c66"></div>
<div class="a" style="left:1217px;top:511px;width:7px;height:7px;background:#7c8892"></div>
<div class="a" style="left:1224px;top:511px;width:7px;height:7px;background:#64707a"></div>
<div class="a" style="left:1231px;top:511px;width:7px;height:7px;background:#36424c"></div>
<div class="a" style="left:1126px;top:518px;width:7px;height:7px;background:#3e4a54"></div>
<div class="a" style="left:1133px;top:518px;width:7px;height:7px;background:#4c5862"></div>
<div class="a" style="left:1140px;top:518px;width:7px;height:7px;background:#5c6872"></div>
<div class="a" style="left:1147px;top:518px;width:7px;height:7px;background:#5c6872"></div>
<div class="a" style="left:1154px;top:518px;width:7px;height:7px;background:#46525c"></div>
<div class="a" style="left:1161px;top:518px;width:7px;height:7px;background:#5e6a74"></div>
<div class="a" style="left:1168px;top:518px;width:7px;height:7px;background:#505c66"></div>
<div class="a" style="left:1175px;top:518px;width:7px;height:7px;background:#5c6872"></div>
<div class="a" style="left:1182px;top:518px;width:7px;height:7px;background:#58646e"></div>
<div class="a" style="left:1189px;top:518px;width:7px;height:7px;background:#64707a"></div>
<div class="a" style="left:1196px;top:518px;width:7px;height:7px;background:#5e6a74"></div>
<div class="a" style="left:1203px;top:518px;width:7px;height:7px;background:#26323c"></div>
<div class="a" style="left:1210px;top:518px;width:7px;height:7px;background:#58646e"></div>
<div class="a" style="left:1217px;top:518px;width:7px;height:7px;background:#36424c"></div>
<div class="a" style="left:1000px;top:525px;width:119px;height:7px;background:#3c1016"></div>
<div class="a" style="left:979px;top:525px;width:14px;height:7px;background:#2c1c2c"></div>
<div class="a" style="left:993px;top:525px;width:7px;height:7px;background:#2a1a24"></div>
<div class="a" style="left:1119px;top:525px;width:7px;height:7px;background:#2a1a24"></div>
<div class="a" style="left:1126px;top:525px;width:7px;height:7px;background:#525e68"></div>
<div class="a" style="left:1133px;top:525px;width:7px;height:7px;background:#58646e"></div>
<div class="a" style="left:1140px;top:525px;width:7px;height:7px;background:#242e3a"></div>
<div class="a" style="left:1147px;top:525px;width:7px;height:7px;background:#3e4854"></div>
<div class="a" style="left:1154px;top:525px;width:7px;height:7px;background:#5e6a74"></div>
<div class="a" style="left:1161px;top:525px;width:7px;height:7px;background:#505c66"></div>
<div class="a" style="left:1168px;top:525px;width:7px;height:7px;background:#37414d"></div>
<div class="a" style="left:1175px;top:525px;width:7px;height:7px;background:#28323e"></div>
<div class="a" style="left:1182px;top:525px;width:7px;height:7px;background:#525e68"></div>
<div class="a" style="left:1189px;top:525px;width:7px;height:7px;background:#343e4a"></div>
<div class="a" style="left:1196px;top:525px;width:7px;height:7px;background:#7c8892"></div>
<div class="a" style="left:1203px;top:525px;width:7px;height:7px;background:#333d49"></div>
<div class="a" style="left:1210px;top:525px;width:7px;height:7px;background:#3e4a54"></div>
<div class="a" style="left:1217px;top:525px;width:7px;height:7px;background:#36424c"></div>
<div class="a" style="left:1000px;top:532px;width:7px;height:7px;background:#761a1c"></div>
<div class="a" style="left:1007px;top:532px;width:7px;height:7px;background:#7e1e20"></div>
<div class="a" style="left:1014px;top:532px;width:7px;height:7px;background:#7a1c1e"></div>
<div class="a" style="left:1021px;top:532px;width:7px;height:7px;background:#7e1e20"></div>
<div class="a" style="left:1028px;top:532px;width:7px;height:7px;background:#6c1719"></div>
<div class="a" style="left:1035px;top:532px;width:7px;height:7px;background:#7e1e20"></div>
<div class="a" style="left:1042px;top:532px;width:7px;height:7px;background:#6c1719"></div>
<div class="a" style="left:1049px;top:532px;width:7px;height:7px;background:#721a1c"></div>
<div class="a" style="left:1056px;top:532px;width:7px;height:7px;background:#7e1e20"></div>
<div class="a" style="left:1063px;top:532px;width:7px;height:7px;background:#5a1012"></div>
<div class="a" style="left:1070px;top:532px;width:7px;height:7px;background:#7e1e20"></div>
<div class="a" style="left:1077px;top:532px;width:7px;height:7px;background:#661416"></div>
<div class="a" style="left:1084px;top:532px;width:7px;height:7px;background:#7e1e20"></div>
<div class="a" style="left:1091px;top:532px;width:7px;height:7px;background:#661416"></div>
<div class="a" style="left:1098px;top:532px;width:7px;height:7px;background:#761a1c"></div>
<div class="a" style="left:1105px;top:532px;width:7px;height:7px;background:#6c1719"></div>
<div class="a" style="left:1112px;top:532px;width:7px;height:7px;background:#4e0c0e"></div>
<div class="a" style="left:979px;top:532px;width:14px;height:7px;background:#7e1a22"></div>
<div class="a" style="left:1126px;top:532px;width:7px;height:7px;background:#5c6872"></div>
<div class="a" style="left:1133px;top:532px;width:7px;height:7px;background:#5c6872"></div>
<div class="a" style="left:1140px;top:532px;width:7px;height:7px;background:#7c8892"></div>
<div class="a" style="left:1147px;top:532px;width:7px;height:7px;background:#5e6a74"></div>
<div class="a" style="left:1154px;top:532px;width:7px;height:7px;background:#7c8892"></div>
<div class="a" style="left:1161px;top:532px;width:7px;height:7px;background:#525e68"></div>
<div class="a" style="left:1168px;top:532px;width:7px;height:7px;background:#4c5862"></div>
<div class="a" style="left:1175px;top:532px;width:7px;height:7px;background:#46525c"></div>
<div class="a" style="left:1182px;top:532px;width:7px;height:7px;background:#6a7680"></div>
<div class="a" style="left:1189px;top:532px;width:7px;height:7px;background:#5e6a74"></div>
<div class="a" style="left:1196px;top:532px;width:7px;height:7px;background:#64707a"></div>
<div class="a" style="left:1203px;top:532px;width:7px;height:7px;background:#46525c"></div>
<div class="a" style="left:1210px;top:532px;width:7px;height:7px;background:#46525c"></div>
<div class="a" style="left:1217px;top:532px;width:7px;height:7px;background:#64707a"></div>
<div class="a" style="left:1224px;top:532px;width:7px;height:7px;background:#5c6872"></div>
<div class="a" style="left:1231px;top:532px;width:7px;height:7px;background:#36424c"></div>
<div class="a" style="left:1126px;top:539px;width:7px;height:7px;background:#7c8892"></div>
<div class="a" style="left:1133px;top:539px;width:7px;height:7px;background:#525e68"></div>
<div class="a" style="left:1140px;top:539px;width:7px;height:7px;background:#505c66"></div>
<div class="a" style="left:1147px;top:539px;width:7px;height:7px;background:#58646e"></div>
<div class="a" style="left:1154px;top:539px;width:7px;height:7px;background:#7c8892"></div>
<div class="a" style="left:1161px;top:539px;width:7px;height:7px;background:#58646e"></div>
<div class="a" style="left:1168px;top:539px;width:7px;height:7px;background:#525e68"></div>
<div class="a" style="left:1175px;top:539px;width:7px;height:7px;background:#4c5862"></div>
<div class="a" style="left:1182px;top:539px;width:7px;height:7px;background:#4c5862"></div>
<div class="a" style="left:1189px;top:539px;width:7px;height:7px;background:#7c8892"></div>
<div class="a" style="left:1196px;top:539px;width:7px;height:7px;background:#46525c"></div>
<div class="a" style="left:1000px;top:546px;width:119px;height:7px;background:#3c1016"></div>
<div class="a" style="left:979px;top:546px;width:14px;height:7px;background:#0c2436"></div>
<div class="a" style="left:993px;top:546px;width:7px;height:7px;background:#2a1a24"></div>
<div class="a" style="left:1119px;top:546px;width:7px;height:7px;background:#2a1a24"></div>
<div class="a" style="left:1126px;top:546px;width:7px;height:7px;background:#727e88"></div>
<div class="a" style="left:1133px;top:546px;width:7px;height:7px;background:#46525c"></div>
<div class="a" style="left:1140px;top:546px;width:7px;height:7px;background:#26323c"></div>
<div class="a" style="left:1147px;top:546px;width:7px;height:7px;background:#525e68"></div>
<div class="a" style="left:1154px;top:546px;width:7px;height:7px;background:#242e3a"></div>
<div class="a" style="left:1161px;top:546px;width:7px;height:7px;background:#3e4a54"></div>
<div class="a" style="left:1168px;top:546px;width:7px;height:7px;background:#434d59"></div>
<div class="a" style="left:1175px;top:546px;width:7px;height:7px;background:#727e88"></div>
<div class="a" style="left:1182px;top:546px;width:7px;height:7px;background:#58646e"></div>
<div class="a" style="left:1189px;top:546px;width:7px;height:7px;background:#3e4a54"></div>
<div class="a" style="left:1196px;top:546px;width:7px;height:7px;background:#202a36"></div>
<div class="a" style="left:1000px;top:553px;width:7px;height:7px;background:#761a1c"></div>
<div class="a" style="left:1007px;top:553px;width:7px;height:7px;background:#661416"></div>
<div class="a" style="left:1014px;top:553px;width:7px;height:7px;background:#721a1c"></div>
<div class="a" style="left:1021px;top:553px;width:7px;height:7px;background:#761a1c"></div>
<div class="a" style="left:1028px;top:553px;width:7px;height:7px;background:#6a1618"></div>
<div class="a" style="left:1035px;top:553px;width:7px;height:7px;background:#7a1c1e"></div>
<div class="a" style="left:1042px;top:553px;width:7px;height:7px;background:#7a1c1e"></div>
<div class="a" style="left:1049px;top:553px;width:7px;height:7px;background:#661416"></div>
<div class="a" style="left:1056px;top:553px;width:7px;height:7px;background:#6c1719"></div>
<div class="a" style="left:1063px;top:553px;width:7px;height:7px;background:#5a1012"></div>
<div class="a" style="left:1070px;top:553px;width:7px;height:7px;background:#6c1719"></div>
<div class="a" style="left:1077px;top:553px;width:7px;height:7px;background:#721a1c"></div>
<div class="a" style="left:1084px;top:553px;width:7px;height:7px;background:#7e1e20"></div>
<div class="a" style="left:1091px;top:553px;width:7px;height:7px;background:#7a1c1e"></div>
<div class="a" style="left:1098px;top:553px;width:7px;height:7px;background:#721a1c"></div>
<div class="a" style="left:1105px;top:553px;width:7px;height:7px;background:#661416"></div>
<div class="a" style="left:1112px;top:553px;width:7px;height:7px;background:#4e0c0e"></div>
<div class="a" style="left:979px;top:553px;width:14px;height:7px;background:#7e1a22"></div>
<div class="a" style="left:1126px;top:553px;width:7px;height:7px;background:#7c8892"></div>
<div class="a" style="left:1133px;top:553px;width:7px;height:7px;background:#26323c"></div>
<div class="a" style="left:1140px;top:553px;width:7px;height:7px;background:#6a7680"></div>
<div class="a" style="left:1147px;top:553px;width:7px;height:7px;background:#46525c"></div>
<div class="a" style="left:1154px;top:553px;width:7px;height:7px;background:#64707a"></div>
<div class="a" style="left:1161px;top:553px;width:7px;height:7px;background:#4c5862"></div>
<div class="a" style="left:1168px;top:553px;width:7px;height:7px;background:#46525c"></div>
<div class="a" style="left:1175px;top:553px;width:7px;height:7px;background:#64707a"></div>
<div class="a" style="left:1182px;top:553px;width:7px;height:7px;background:#64707a"></div>
<div class="a" style="left:1189px;top:553px;width:7px;height:7px;background:#505c66"></div>
<div class="a" style="left:1196px;top:553px;width:7px;height:7px;background:#3e4a54"></div>
<div class="a" style="left:1203px;top:553px;width:7px;height:7px;background:#7c8892"></div>
<div class="a" style="left:1210px;top:553px;width:7px;height:7px;background:#64707a"></div>
<div class="a" style="left:1217px;top:553px;width:7px;height:7px;background:#5e6a74"></div>
<div class="a" style="left:1224px;top:553px;width:7px;height:7px;background:#36424c"></div>
<div class="a" style="left:1000px;top:560px;width:7px;height:7px;background:#5e1214"></div>
<div class="a" style="left:1007px;top:560px;width:7px;height:7px;background:#581012"></div>
<div class="a" style="left:1014px;top:560px;width:7px;height:7px;background:#641416"></div>
<div class="a" style="left:1021px;top:560px;width:7px;height:7px;background:#581012"></div>
<div class="a" style="left:1028px;top:560px;width:7px;height:7px;background:#5e1214"></div>
<div class="a" style="left:1035px;top:560px;width:7px;height:7px;background:#5e1214"></div>
<div class="a" style="left:1042px;top:560px;width:7px;height:7px;background:#581012"></div>
<div class="a" style="left:1049px;top:560px;width:7px;height:7px;background:#6a1618"></div>
<div class="a" style="left:1056px;top:560px;width:7px;height:7px;background:#581012"></div>
<div class="a" style="left:1063px;top:560px;width:7px;height:7px;background:#641416"></div>
<div class="a" style="left:1070px;top:560px;width:7px;height:7px;background:#641416"></div>
<div class="a" style="left:1077px;top:560px;width:7px;height:7px;background:#5e1214"></div>
<div class="a" style="left:1084px;top:560px;width:7px;height:7px;background:#5e1214"></div>
<div class="a" style="left:1091px;top:560px;width:7px;height:7px;background:#641416"></div>
<div class="a" style="left:1098px;top:560px;width:7px;height:7px;background:#581012"></div>
<div class="a" style="left:1105px;top:560px;width:7px;height:7px;background:#5e1214"></div>
<div class="a" style="left:1112px;top:560px;width:7px;height:7px;background:#4e0c0e"></div>
<div class="a" style="left:979px;top:560px;width:14px;height:7px;background:#661a26"></div>
<div class="a" style="left:1126px;top:560px;width:7px;height:7px;background:#7c8892"></div>
<div class="a" style="left:1133px;top:560px;width:7px;height:7px;background:#5e6a74"></div>
<div class="a" style="left:1140px;top:560px;width:7px;height:7px;background:#4c5862"></div>
<div class="a" style="left:1147px;top:560px;width:7px;height:7px;background:#58646e"></div>
<div class="a" style="left:1154px;top:560px;width:7px;height:7px;background:#4c5862"></div>
<div class="a" style="left:1161px;top:560px;width:7px;height:7px;background:#46525c"></div>
<div class="a" style="left:1168px;top:560px;width:7px;height:7px;background:#525e68"></div>
<div class="a" style="left:1175px;top:560px;width:7px;height:7px;background:#3e4a54"></div>
<div class="a" style="left:1182px;top:560px;width:7px;height:7px;background:#6a7680"></div>
<div class="a" style="left:1189px;top:560px;width:7px;height:7px;background:#7c8892"></div>
<div class="a" style="left:1196px;top:560px;width:7px;height:7px;background:#64707a"></div>
<div class="a" style="left:1203px;top:560px;width:7px;height:7px;background:#5c6872"></div>
<div class="a" style="left:1210px;top:560px;width:7px;height:7px;background:#4c5862"></div>
<div class="a" style="left:1217px;top:560px;width:7px;height:7px;background:#525e68"></div>
<div class="a" style="left:1224px;top:560px;width:7px;height:7px;background:#7c8892"></div>
<div class="a" style="left:1126px;top:567px;width:7px;height:7px;background:#4c5862"></div>
<div class="a" style="left:1133px;top:567px;width:7px;height:7px;background:#3e4a54"></div>
<div class="a" style="left:1140px;top:567px;width:7px;height:7px;background:#727e88"></div>
<div class="a" style="left:1147px;top:567px;width:7px;height:7px;background:#5e6a74"></div>
<div class="a" style="left:1154px;top:567px;width:7px;height:7px;background:#525e68"></div>
<div class="a" style="left:1161px;top:567px;width:7px;height:7px;background:#525e68"></div>
<div class="a" style="left:1168px;top:567px;width:7px;height:7px;background:#727e88"></div>
<div class="a" style="left:1175px;top:567px;width:7px;height:7px;background:#26323c"></div>
<div class="a" style="left:1182px;top:567px;width:7px;height:7px;background:#5e6a74"></div>
<div class="a" style="left:1189px;top:567px;width:7px;height:7px;background:#7c8892"></div>
<div class="a" style="left:1196px;top:567px;width:7px;height:7px;background:#505c66"></div>
<div class="a" style="left:1203px;top:567px;width:7px;height:7px;background:#505c66"></div>
<div class="a" style="left:1210px;top:567px;width:7px;height:7px;background:#36424c"></div>
<div class="a" style="left:1126px;top:574px;width:7px;height:7px;background:#5e6a74"></div>
<div class="a" style="left:1133px;top:574px;width:7px;height:7px;background:#6a7680"></div>
<div class="a" style="left:1140px;top:574px;width:7px;height:7px;background:#3e4a54"></div>
<div class="a" style="left:1147px;top:574px;width:7px;height:7px;background:#6a7680"></div>
<div class="a" style="left:1154px;top:574px;width:7px;height:7px;background:#6a7680"></div>
<div class="a" style="left:1161px;top:574px;width:7px;height:7px;background:#6a7680"></div>
<div class="a" style="left:1168px;top:574px;width:7px;height:7px;background:#6a7680"></div>
<div class="a" style="left:1175px;top:574px;width:7px;height:7px;background:#46525c"></div>
<div class="a" style="left:1182px;top:574px;width:7px;height:7px;background:#64707a"></div>
<div class="a" style="left:1189px;top:574px;width:7px;height:7px;background:#6a7680"></div>
<div class="a" style="left:1196px;top:574px;width:7px;height:7px;background:#505c66"></div>
<div class="a" style="left:1203px;top:574px;width:7px;height:7px;background:#505c66"></div>
<div class="a" style="left:1210px;top:574px;width:7px;height:7px;background:#5c6872"></div>
<div class="a" style="left:1217px;top:574px;width:7px;height:7px;background:#36424c"></div>
<div class="a" style="left:1000px;top:581px;width:119px;height:7px;background:#3c1016"></div>
<div class="a" style="left:979px;top:581px;width:14px;height:7px;background:#0c2436"></div>
<div class="a" style="left:993px;top:581px;width:7px;height:7px;background:#2a1a24"></div>
<div class="a" style="left:1119px;top:581px;width:7px;height:7px;background:#2a1a24"></div>
<div class="a" style="left:1126px;top:581px;width:7px;height:7px;background:#727e88"></div>
<div class="a" style="left:1133px;top:581px;width:7px;height:7px;background:#18222e"></div>
<div class="a" style="left:1140px;top:581px;width:7px;height:7px;background:#7c8892"></div>
<div class="a" style="left:1147px;top:581px;width:7px;height:7px;background:#525e68"></div>
<div class="a" style="left:1154px;top:581px;width:7px;height:7px;background:#58646e"></div>
<div class="a" style="left:1161px;top:581px;width:7px;height:7px;background:#4c5862"></div>
<div class="a" style="left:1168px;top:581px;width:7px;height:7px;background:#525e68"></div>
<div class="a" style="left:1175px;top:581px;width:7px;height:7px;background:#58646e"></div>
<div class="a" style="left:1182px;top:581px;width:7px;height:7px;background:#58646e"></div>
<div class="a" style="left:1189px;top:581px;width:7px;height:7px;background:#58646e"></div>
<div class="a" style="left:1196px;top:581px;width:7px;height:7px;background:#525e68"></div>
<div class="a" style="left:1203px;top:581px;width:7px;height:7px;background:#2e3844"></div>
<div class="a" style="left:1210px;top:581px;width:7px;height:7px;background:#4c5862"></div>
<div class="a" style="left:1217px;top:581px;width:7px;height:7px;background:#313b47"></div>
<div class="a" style="left:1000px;top:588px;width:7px;height:7px;background:#6c1719"></div>
<div class="a" style="left:1007px;top:588px;width:7px;height:7px;background:#721a1c"></div>
<div class="a" style="left:1014px;top:588px;width:7px;height:7px;background:#761a1c"></div>
<div class="a" style="left:1021px;top:588px;width:7px;height:7px;background:#6c1719"></div>
<div class="a" style="left:1028px;top:588px;width:7px;height:7px;background:#6a1618"></div>
<div class="a" style="left:1035px;top:588px;width:7px;height:7px;background:#761a1c"></div>
<div class="a" style="left:1042px;top:588px;width:7px;height:7px;background:#7a1c1e"></div>
<div class="a" style="left:1049px;top:588px;width:7px;height:7px;background:#6c1719"></div>
<div class="a" style="left:1056px;top:588px;width:7px;height:7px;background:#721a1c"></div>
<div class="a" style="left:1063px;top:588px;width:7px;height:7px;background:#5a1012"></div>
<div class="a" style="left:1070px;top:588px;width:7px;height:7px;background:#7e1e20"></div>
<div class="a" style="left:1077px;top:588px;width:7px;height:7px;background:#6a1618"></div>
<div class="a" style="left:1084px;top:588px;width:7px;height:7px;background:#6a1618"></div>
<div class="a" style="left:1091px;top:588px;width:7px;height:7px;background:#6a1618"></div>
<div class="a" style="left:1098px;top:588px;width:7px;height:7px;background:#7a1c1e"></div>
<div class="a" style="left:1105px;top:588px;width:7px;height:7px;background:#761a1c"></div>
<div class="a" style="left:1112px;top:588px;width:7px;height:7px;background:#4e0c0e"></div>
<div class="a" style="left:979px;top:588px;width:14px;height:7px;background:#7e1a22"></div>
<div class="a" style="left:1126px;top:588px;width:7px;height:7px;background:#58646e"></div>
<div class="a" style="left:1133px;top:588px;width:7px;height:7px;background:#505c66"></div>
<div class="a" style="left:1140px;top:588px;width:7px;height:7px;background:#5c6872"></div>
<div class="a" style="left:1147px;top:588px;width:7px;height:7px;background:#58646e"></div>
<div class="a" style="left:1154px;top:588px;width:7px;height:7px;background:#5e6a74"></div>
<div class="a" style="left:1161px;top:588px;width:7px;height:7px;background:#5e6a74"></div>
<div class="a" style="left:1168px;top:588px;width:7px;height:7px;background:#46525c"></div>
<div class="a" style="left:1175px;top:588px;width:7px;height:7px;background:#4c5862"></div>
<div class="a" style="left:1182px;top:588px;width:7px;height:7px;background:#3e4a54"></div>
<div class="a" style="left:1189px;top:588px;width:7px;height:7px;background:#727e88"></div>
<div class="a" style="left:1196px;top:588px;width:7px;height:7px;background:#505c66"></div>
<div class="a" style="left:1203px;top:588px;width:7px;height:7px;background:#7c8892"></div>
<div class="a" style="left:1210px;top:588px;width:7px;height:7px;background:#5e6a74"></div>
<div class="a" style="left:1217px;top:588px;width:7px;height:7px;background:#26323c"></div>
<div class="a" style="left:1224px;top:588px;width:7px;height:7px;background:#4c5862"></div>
<div class="a" style="left:1000px;top:595px;width:7px;height:7px;background:#581012"></div>
<div class="a" style="left:1007px;top:595px;width:7px;height:7px;background:#6a1618"></div>
<div class="a" style="left:1014px;top:595px;width:7px;height:7px;background:#5e1214"></div>
<div class="a" style="left:1021px;top:595px;width:7px;height:7px;background:#641416"></div>
<div class="a" style="left:1028px;top:595px;width:7px;height:7px;background:#581012"></div>
<div class="a" style="left:1035px;top:595px;width:7px;height:7px;background:#641416"></div>
<div class="a" style="left:1042px;top:595px;width:7px;height:7px;background:#5e1214"></div>
<div class="a" style="left:1049px;top:595px;width:7px;height:7px;background:#5e1214"></div>
<div class="a" style="left:1056px;top:595px;width:7px;height:7px;background:#5e1214"></div>
<div class="a" style="left:1063px;top:595px;width:7px;height:7px;background:#5e1214"></div>
<div class="a" style="left:1070px;top:595px;width:7px;height:7px;background:#6a1618"></div>
<div class="a" style="left:1077px;top:595px;width:7px;height:7px;background:#6a1618"></div>
<div class="a" style="left:1084px;top:595px;width:7px;height:7px;background:#5e1214"></div>
<div class="a" style="left:1091px;top:595px;width:7px;height:7px;background:#6a1618"></div>
<div class="a" style="left:1098px;top:595px;width:7px;height:7px;background:#641416"></div>
<div class="a" style="left:1105px;top:595px;width:7px;height:7px;background:#581012"></div>
<div class="a" style="left:1112px;top:595px;width:7px;height:7px;background:#4e0c0e"></div>
<div class="a" style="left:979px;top:595px;width:14px;height:7px;background:#661a26"></div>
<div class="a" style="left:1126px;top:595px;width:7px;height:7px;background:#7c8892"></div>
<div class="a" style="left:1133px;top:595px;width:7px;height:7px;background:#4c5862"></div>
<div class="a" style="left:1140px;top:595px;width:7px;height:7px;background:#7c8892"></div>
<div class="a" style="left:1147px;top:595px;width:7px;height:7px;background:#4c5862"></div>
<div class="a" style="left:1154px;top:595px;width:7px;height:7px;background:#525e68"></div>
<div class="a" style="left:1161px;top:595px;width:7px;height:7px;background:#6a7680"></div>
<div class="a" style="left:1168px;top:595px;width:7px;height:7px;background:#505c66"></div>
<div class="a" style="left:1175px;top:595px;width:7px;height:7px;background:#505c66"></div>
<div class="a" style="left:1182px;top:595px;width:7px;height:7px;background:#64707a"></div>
<div class="a" style="left:1189px;top:595px;width:7px;height:7px;background:#3e4a54"></div>
<div class="a" style="left:1196px;top:595px;width:7px;height:7px;background:#727e88"></div>
<div class="a" style="left:1203px;top:595px;width:7px;height:7px;background:#7c8892"></div>
<div class="a" style="left:1210px;top:595px;width:7px;height:7px;background:#6a7680"></div>
<div class="a" style="left:1217px;top:595px;width:7px;height:7px;background:#727e88"></div>
<div class="a" style="left:1224px;top:595px;width:7px;height:7px;background:#36424c"></div>
<div class="a" style="left:1126px;top:602px;width:7px;height:7px;background:#3e4a54"></div>
<div class="a" style="left:1133px;top:602px;width:7px;height:7px;background:#64707a"></div>
<div class="a" style="left:1140px;top:602px;width:7px;height:7px;background:#4c5862"></div>
<div class="a" style="left:1147px;top:602px;width:7px;height:7px;background:#26323c"></div>
<div class="a" style="left:1154px;top:602px;width:7px;height:7px;background:#727e88"></div>
<div class="a" style="left:1161px;top:602px;width:7px;height:7px;background:#525e68"></div>
<div class="a" style="left:1168px;top:602px;width:7px;height:7px;background:#525e68"></div>
<div class="a" style="left:1175px;top:602px;width:7px;height:7px;background:#505c66"></div>
<div class="a" style="left:1182px;top:602px;width:7px;height:7px;background:#505c66"></div>
<div class="a" style="left:1189px;top:602px;width:7px;height:7px;background:#7c8892"></div>
<div class="a" style="left:1196px;top:602px;width:7px;height:7px;background:#58646e"></div>
<div class="a" style="left:1203px;top:602px;width:7px;height:7px;background:#505c66"></div>
<div class="a" style="left:1210px;top:602px;width:7px;height:7px;background:#5c6872"></div>
<div class="a" style="left:1126px;top:609px;width:7px;height:7px;background:#3e4a54"></div>
<div class="a" style="left:1133px;top:609px;width:7px;height:7px;background:#64707a"></div>
<div class="a" style="left:1140px;top:609px;width:7px;height:7px;background:#6a7680"></div>
<div class="a" style="left:1147px;top:609px;width:7px;height:7px;background:#505c66"></div>
<div class="a" style="left:1154px;top:609px;width:7px;height:7px;background:#525e68"></div>
<div class="a" style="left:1161px;top:609px;width:7px;height:7px;background:#58646e"></div>
<div class="a" style="left:1168px;top:609px;width:7px;height:7px;background:#3e4a54"></div>
<div class="a" style="left:1175px;top:609px;width:7px;height:7px;background:#5c6872"></div>
<div class="a" style="left:1182px;top:609px;width:7px;height:7px;background:#58646e"></div>
<div class="a" style="left:1189px;top:609px;width:7px;height:7px;background:#58646e"></div>
<div class="a" style="left:1196px;top:609px;width:7px;height:7px;background:#505c66"></div>
<div class="a" style="left:1203px;top:609px;width:7px;height:7px;background:#727e88"></div>
<div class="a" style="left:1210px;top:609px;width:7px;height:7px;background:#58646e"></div>
<div class="a" style="left:1000px;top:616px;width:119px;height:7px;background:#3c1016"></div>
<div class="a" style="left:979px;top:616px;width:14px;height:7px;background:#2c1c2c"></div>
<div class="a" style="left:993px;top:616px;width:7px;height:7px;background:#2a1a24"></div>
<div class="a" style="left:1119px;top:616px;width:7px;height:7px;background:#2a1a24"></div>
<div class="a" style="left:1126px;top:616px;width:7px;height:7px;background:#525e68"></div>
<div class="a" style="left:1133px;top:616px;width:7px;height:7px;background:#2b3541"></div>
<div class="a" style="left:1140px;top:616px;width:7px;height:7px;background:#333d49"></div>
<div class="a" style="left:1147px;top:616px;width:7px;height:7px;background:#5e6a74"></div>
<div class="a" style="left:1154px;top:616px;width:7px;height:7px;background:#7c8892"></div>
<div class="a" style="left:1161px;top:616px;width:7px;height:7px;background:#505c66"></div>
<div class="a" style="left:1168px;top:616px;width:7px;height:7px;background:#727e88"></div>
<div class="a" style="left:1175px;top:616px;width:7px;height:7px;background:#18222e"></div>
<div class="a" style="left:1182px;top:616px;width:7px;height:7px;background:#5c6872"></div>
<div class="a" style="left:1189px;top:616px;width:7px;height:7px;background:#525e68"></div>
<div class="a" style="left:1196px;top:616px;width:7px;height:7px;background:#434d59"></div>
<div class="a" style="left:1203px;top:616px;width:7px;height:7px;background:#3e4a54"></div>
<div class="a" style="left:1210px;top:616px;width:7px;height:7px;background:#202a36"></div>
<div class="a" style="left:1000px;top:623px;width:119px;height:3px;background:#3c1016"></div>
<div class="a" style="left:979px;top:623px;width:14px;height:3px;background:#0c2436"></div>
<div class="a" style="left:993px;top:623px;width:7px;height:3px;background:#2a1a24"></div>
<div class="a" style="left:1119px;top:623px;width:7px;height:3px;background:#2a1a24"></div>
<div class="a" style="left:1126px;top:623px;width:7px;height:3px;background:#3e4a54"></div>
<div class="a" style="left:1133px;top:623px;width:7px;height:3px;background:#3e4a54"></div>
<div class="a" style="left:1140px;top:623px;width:7px;height:3px;background:#46525c"></div>
<div class="a" style="left:1147px;top:623px;width:7px;height:3px;background:#525e68"></div>
<div class="a" style="left:1154px;top:623px;width:7px;height:3px;background:#505c66"></div>
<div class="a" style="left:1161px;top:623px;width:7px;height:3px;background:#333d49"></div>
<div class="a" style="left:1168px;top:623px;width:7px;height:3px;background:#2e3844"></div>
<div class="a" style="left:1175px;top:623px;width:7px;height:3px;background:#505c66"></div>
<div class="a" style="left:1182px;top:623px;width:7px;height:3px;background:#2d3743"></div>
<div class="a" style="left:1189px;top:623px;width:7px;height:3px;background:#46525c"></div>
<div class="a" style="left:1196px;top:623px;width:7px;height:3px;background:#58646e"></div>
<div class="a" style="left:1203px;top:623px;width:7px;height:3px;background:#3e4a54"></div>
<div class="a" style="left:1210px;top:623px;width:7px;height:3px;background:#202a36"></div>
<div class="a" style="left:1256px;top:359px;width:9px;height:267px;background:linear-gradient(90deg,#062034,#0a2c48 50%,#062034)"></div>
<div class="a" style="left:1257px;top:360px;width:7px;height:17px;background:#0a2c4a"></div>
<div class="a" style="left:1257px;top:379px;width:7px;height:18px;background:#0a2c4a"></div>
<div class="a" style="left:1208.5px;top:632.6px;width:57.5px;height:14.3px;border-radius:2.5px;background:#034270"></div>
<div class="t" style="left:1087.5px;width:300px;text-align:center;top:634.8px;font-size:9.6px;line-height:9.6px;font-weight:normal;color:#f0f0f0;letter-spacing:0.3px">Historia</div>
<div class="a" style="left:10px;top:658px;width:125px;height:32px;background:#053f66;"></div>
<div class="a" style="left:10px;top:658px;width:7px;height:7px;background:#0d5a8a;"></div>
<div class="a" style="left:17px;top:658px;width:7px;height:7px;background:#2a74a8;"></div>
<div class="a" style="left:24px;top:658px;width:7px;height:7px;background:#3c82b8;"></div>
<div class="a" style="left:31px;top:658px;width:7px;height:7px;background:#2f7aaf;"></div>
<div class="a" style="left:10px;top:665px;width:7px;height:7px;background:#2a74a8;"></div>
<div class="a" style="left:17px;top:665px;width:7px;height:7px;background:#2d76aa;"></div>
<div class="a" style="left:24px;top:665px;width:7px;height:7px;background:#0a4e80;"></div>
<div class="a" style="left:31px;top:665px;width:7px;height:7px;background:#3c82b8;"></div>
<div class="a" style="left:38px;top:665px;width:7px;height:7px;background:#2f7aaf;"></div>
<div class="a" style="left:10px;top:672px;width:7px;height:7px;background:#4a90c8;"></div>
<div class="a" style="left:17px;top:672px;width:7px;height:7px;background:#2f7aaf;"></div>
<div class="a" style="left:24px;top:672px;width:7px;height:7px;background:#4a90c8;"></div>
<div class="a" style="left:31px;top:672px;width:7px;height:7px;background:#2d76aa;"></div>
<div class="a" style="left:38px;top:672px;width:7px;height:7px;background:#3a80b4;"></div>
<div class="a" style="left:10px;top:679px;width:7px;height:7px;background:#2a74a8;"></div>
<div class="a" style="left:17px;top:679px;width:7px;height:7px;background:#4a90c8;"></div>
<div class="a" style="left:24px;top:679px;width:7px;height:7px;background:#2f7aaf;"></div>
<div class="a" style="left:31px;top:679px;width:7px;height:7px;background:#4a90c8;"></div>
<div class="a" style="left:38px;top:679px;width:7px;height:7px;background:#0f5688;"></div>
<div class="a" style="left:10px;top:686px;width:7px;height:4px;background:#0d5a8a;"></div>
<div class="a" style="left:17px;top:686px;width:7px;height:4px;background:#2a74a8;"></div>
<div class="a" style="left:24px;top:686px;width:7px;height:4px;background:#3c82b8;"></div>
<div class="a" style="left:31px;top:686px;width:7px;height:4px;background:#1d66a0;"></div>
<div class="a" style="left:52px;top:672px;width:7px;height:7px;background:#0a2d48;"></div>
<div class="a" style="left:59px;top:672px;width:7px;height:7px;background:#082a44;"></div>
<div class="a" style="left:66px;top:672px;width:7px;height:7px;background:#0a3050;"></div>
<div class="a" style="left:73px;top:672px;width:7px;height:7px;background:#0b3352;"></div>
<div class="a" style="left:80px;top:672px;width:7px;height:7px;background:#082a44;"></div>
<div class="a" style="left:87px;top:672px;width:7px;height:7px;background:#092c48;"></div>
<div class="a" style="left:94px;top:672px;width:7px;height:7px;background:#08304f;"></div>
<div class="a" style="left:101px;top:672px;width:7px;height:7px;background:#0a3a5c;"></div>
<div class="a" style="left:108px;top:672px;width:7px;height:7px;background:#062038;"></div>
<div class="a" style="left:115px;top:672px;width:7px;height:7px;background:#082a44;"></div>
<div class="a" style="left:122px;top:672px;width:7px;height:7px;background:#051a2c;"></div>
<div class="a" style="left:129px;top:672px;width:7px;height:7px;background:#0a3a5c;"></div>
<div class="a" style="left:52px;top:665px;width:84px;height:7px;background:#053d62;"></div>
<div class="a" style="left:526.4px;top:658.2px;width:122.3px;height:28.8px;border-radius:3px;background:#033f68"></div>
<div class="a" style="left:531.3px;top:665.8px;width:15.3px;height:14.7px;background:#061b2a;"></div>
<svg class="a" style="left:531px;top:665px" width="16" height="16" viewBox="531 665 16 16">
<g stroke="#e6e6e6" stroke-width="1.2" fill="none">
<line x1="539" y1="673" x2="539" y2="678.5"/><line x1="534.5" y1="678.8" x2="545" y2="678.8"/>
<line x1="538.8" y1="672" x2="537.8" y2="667.5"/><line x1="539.5" y1="672.8" x2="544" y2="674"/><line x1="538.5" y1="673.5" x2="535" y2="676"/>
</g></svg>
<div class="t" style="left:552.3px;top:668.6px;font-size:9.6px;line-height:9.6px;font-weight:normal;color:#ececec;letter-spacing:0px">Schemat GPO</div>
<div class="a" style="left:1148px;top:658.3px;width:122.2px;height:28.5px;border-radius:3px;background:#033f68"></div>
<svg class="a" style="left:1152px;top:665px" width="17" height="17" viewBox="1152 665 17 17">
<g stroke="#e0e6ea" stroke-width="1.1" fill="none">
<path d="M1154.2 667.5 H1166.8 V677 L1163.8 680.3 H1154.2 Z"/>
<path d="M1163.8 680.3 V677.3 H1166.8"/>
<line x1="1156.5" y1="670.5" x2="1164.5" y2="670.5"/>
<line x1="1156.5" y1="672.8" x2="1164.5" y2="672.8"/>
<line x1="1156.5" y1="675" x2="1161" y2="675"/>
</g>
<g fill="#e0e6ea"><rect x="1155" y="666" width="1" height="2"/><rect x="1157.5" y="666" width="1" height="2"/><rect x="1160" y="666" width="1" height="2"/><rect x="1162.5" y="666" width="1" height="2"/><rect x="1165" y="666" width="1" height="2"/></g>
</svg>
<div class="t" style="left:1174.0px;top:668.7px;font-size:9.8px;line-height:9.8px;font-weight:bold;color:#f0f0f0;letter-spacing:0px">Notatnik</div>
<div class="a" style="left:1245.7px;top:665.1px;width:16px;height:16px;border-radius:50%;background:#f5a623"></div>
<div class="a" style="left:1252.7px;top:667.6px;width:2.2px;height:7.4px;background:#111;border-radius:1px"></div>
<div class="a" style="left:1252.6px;top:676.3px;width:2.4px;height:2.4px;background:#111;border-radius:50%"></div>
</body></html>
